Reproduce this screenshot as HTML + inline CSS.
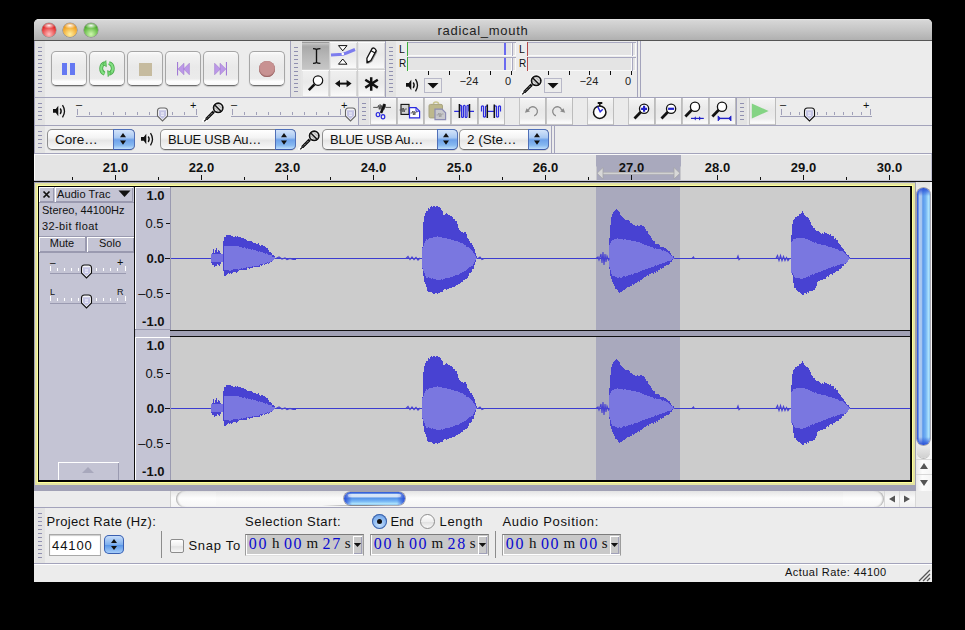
<!DOCTYPE html>
<html><head><meta charset="utf-8"><style>
html,body{margin:0;padding:0;}
body{width:965px;height:630px;background:#000;position:relative;overflow:hidden;font-family:"Liberation Sans",sans-serif;}
body>div,body>span,body>svg{position:absolute;display:block;box-sizing:border-box;}
body>span{white-space:nowrap;}
body>div>div{box-sizing:border-box;}
</style></head><body>
<div style="left:34px;top:19px;width:898px;height:563px;background:#ececec;border-radius:5px 5px 0 0"></div>
<div style="left:34px;top:19px;width:898px;height:21px;background:linear-gradient(#e8e8e8,#d6d6d6 8%,#c6c6c6 50%,#b0b0b0);border-radius:5px 5px 0 0"></div>
<div style="left:34px;top:40px;width:898px;height:1px;background:#555"></div>
<div style="left:42px;top:23px;width:14px;height:14px;border-radius:50%;background:radial-gradient(ellipse 45% 22% at 50% 18%,rgba(255,255,255,.95),rgba(255,255,255,0)),radial-gradient(circle at 50% 80%,#ffc0c0,#e22a2a 65%,#9a1414);box-shadow:0 0 0 0.6px rgba(0,0,0,.3)"></div>
<div style="left:63px;top:23px;width:14px;height:14px;border-radius:50%;background:radial-gradient(ellipse 45% 22% at 50% 18%,rgba(255,255,255,.95),rgba(255,255,255,0)),radial-gradient(circle at 50% 80%,#fff0a0,#f0a020 65%,#b05a08);box-shadow:0 0 0 0.6px rgba(0,0,0,.3)"></div>
<div style="left:84px;top:23px;width:14px;height:14px;border-radius:50%;background:radial-gradient(ellipse 45% 22% at 50% 18%,rgba(255,255,255,.95),rgba(255,255,255,0)),radial-gradient(circle at 50% 80%,#d0f8b0,#52b032 65%,#2a6a14);box-shadow:0 0 0 0.6px rgba(0,0,0,.3)"></div>
<span style="left:383px;width:200px;text-align:center;top:23.60px;font-size:13px;line-height:13px;font-family:'Liberation Sans',sans-serif;color:#222;letter-spacing:0.72px">radical_mouth</span>
<div style="left:34px;top:41px;width:1px;height:113px;background:#a3a3bb"></div>
<div style="left:34px;top:97px;width:898px;height:1px;background:#a3a3bb"></div>
<div style="left:34px;top:125px;width:898px;height:1px;background:#a3a3bb"></div>
<div style="left:34px;top:153px;width:898px;height:1px;background:#a3a3bb"></div>
<div style="left:35px;top:41px;width:10px;height:56px;background:#e3e3e3"></div>
<div style="left:38px;top:47px;width:4px;height:1px;background:#9090b0"></div>
<div style="left:38px;top:51px;width:4px;height:1px;background:#9090b0"></div>
<div style="left:38px;top:55px;width:4px;height:1px;background:#9090b0"></div>
<div style="left:38px;top:59px;width:4px;height:1px;background:#9090b0"></div>
<div style="left:38px;top:63px;width:4px;height:1px;background:#9090b0"></div>
<div style="left:38px;top:67px;width:4px;height:1px;background:#9090b0"></div>
<div style="left:38px;top:71px;width:4px;height:1px;background:#9090b0"></div>
<div style="left:38px;top:75px;width:4px;height:1px;background:#9090b0"></div>
<div style="left:38px;top:79px;width:4px;height:1px;background:#9090b0"></div>
<div style="left:38px;top:83px;width:4px;height:1px;background:#9090b0"></div>
<div style="left:38px;top:87px;width:4px;height:1px;background:#9090b0"></div>
<div style="left:38px;top:91px;width:4px;height:1px;background:#9090b0"></div>
<div style="left:51px;top:51px;width:36px;height:35px;border:1px solid #a6a6a6;border-bottom-color:#6c6c6c;border-radius:5px;background:linear-gradient(#fcfcfc 0%,#f2f2f2 10%,#e9e9e9 45%,#ebebeb 80%,#fefefe 90%,#f8f8f8 100%);box-shadow:0 1px 1px rgba(0,0,0,.18)"></div>
<div style="left:89px;top:51px;width:36px;height:35px;border:1px solid #a6a6a6;border-bottom-color:#6c6c6c;border-radius:5px;background:linear-gradient(#fcfcfc 0%,#f2f2f2 10%,#e9e9e9 45%,#ebebeb 80%,#fefefe 90%,#f8f8f8 100%);box-shadow:0 1px 1px rgba(0,0,0,.18)"></div>
<div style="left:127px;top:51px;width:36px;height:35px;border:1px solid #a6a6a6;border-bottom-color:#6c6c6c;border-radius:5px;background:linear-gradient(#fcfcfc 0%,#f2f2f2 10%,#e9e9e9 45%,#ebebeb 80%,#fefefe 90%,#f8f8f8 100%);box-shadow:0 1px 1px rgba(0,0,0,.18)"></div>
<div style="left:165px;top:51px;width:36px;height:35px;border:1px solid #a6a6a6;border-bottom-color:#6c6c6c;border-radius:5px;background:linear-gradient(#fcfcfc 0%,#f2f2f2 10%,#e9e9e9 45%,#ebebeb 80%,#fefefe 90%,#f8f8f8 100%);box-shadow:0 1px 1px rgba(0,0,0,.18)"></div>
<div style="left:203px;top:51px;width:36px;height:35px;border:1px solid #a6a6a6;border-bottom-color:#6c6c6c;border-radius:5px;background:linear-gradient(#fcfcfc 0%,#f2f2f2 10%,#e9e9e9 45%,#ebebeb 80%,#fefefe 90%,#f8f8f8 100%);box-shadow:0 1px 1px rgba(0,0,0,.18)"></div>
<div style="left:249px;top:51px;width:36px;height:35px;border:1px solid #a6a6a6;border-bottom-color:#6c6c6c;border-radius:5px;background:linear-gradient(#fcfcfc 0%,#f2f2f2 10%,#e9e9e9 45%,#ebebeb 80%,#fefefe 90%,#f8f8f8 100%);box-shadow:0 1px 1px rgba(0,0,0,.18)"></div>
<div style="left:62px;top:63px;width:5px;height:12px;background:#6478f2"></div>
<div style="left:70px;top:63px;width:5px;height:12px;background:#6478f2"></div>
<svg style="left:90px;top:52px;" width="36" height="34" viewBox="0 0 36 34"><g fill="none"><path d="M15 11.05 A5.8 5.8 0 0 0 14.55 21.76" stroke="#48a848" stroke-width="3.8"/><path d="M18.98 11.05 A5.8 5.8 0 0 1 19.45 21.76" stroke="#48a848" stroke-width="3.8"/><path d="M15 11.05 A5.8 5.8 0 0 0 14.55 21.76" stroke="#82e082" stroke-width="2.2"/><path d="M18.98 11.05 A5.8 5.8 0 0 1 19.45 21.76" stroke="#82e082" stroke-width="2.2"/></g><path d="M15.9 8.6 L16.4 14.6 L12.6 12.4Z M18.1 24.6 L17.6 18.6 L21.4 20.8Z" fill="#74d874" stroke="#48a848" stroke-width="0.7"/></svg>
<div style="left:139px;top:63px;width:13px;height:13px;background:#c6bb9f"></div>
<svg style="left:175px;top:61px;" width="16" height="16" viewBox="0 0 16 16"><rect x="2" y="1" width="1.1" height="13.5" fill="#a27ad6"/><path d="M3.1 8 L9 2.2 V13.8Z M8.6 8 L14.4 2.2 V13.8Z" fill="#bc98e8" stroke="#9a74c8" stroke-width="0.5"/></svg>
<svg style="left:213px;top:61px;" width="16" height="16" viewBox="0 0 16 16"><rect x="12.9" y="1" width="1.1" height="13.5" fill="#a27ad6"/><path d="M12.9 8 L7 2.2 V13.8Z M7.4 8 L1.6 2.2 V13.8Z" fill="#bc98e8" stroke="#9a74c8" stroke-width="0.5"/></svg>
<div style="left:259px;top:61px;width:16px;height:16px;border-radius:50%;background:#c89292;box-shadow:inset 0 -1px 1px #946060,0 0 0.6px #a07070"></div>
<div style="left:290px;top:41px;width:1px;height:56px;background:#a3a3bb"></div>
<div style="left:291px;top:41px;width:10px;height:56px;background:#e3e3e3"></div>
<div style="left:294px;top:47px;width:4px;height:1px;background:#9090b0"></div>
<div style="left:294px;top:51px;width:4px;height:1px;background:#9090b0"></div>
<div style="left:294px;top:55px;width:4px;height:1px;background:#9090b0"></div>
<div style="left:294px;top:59px;width:4px;height:1px;background:#9090b0"></div>
<div style="left:294px;top:63px;width:4px;height:1px;background:#9090b0"></div>
<div style="left:294px;top:67px;width:4px;height:1px;background:#9090b0"></div>
<div style="left:294px;top:71px;width:4px;height:1px;background:#9090b0"></div>
<div style="left:294px;top:75px;width:4px;height:1px;background:#9090b0"></div>
<div style="left:294px;top:79px;width:4px;height:1px;background:#9090b0"></div>
<div style="left:294px;top:83px;width:4px;height:1px;background:#9090b0"></div>
<div style="left:294px;top:87px;width:4px;height:1px;background:#9090b0"></div>
<div style="left:294px;top:91px;width:4px;height:1px;background:#9090b0"></div>
<div style="left:301px;top:41px;width:84px;height:56px;background:#cfcfcf"></div>
<div style="left:302px;top:42px;width:27px;height:27px;background:linear-gradient(#d4d4d4,#b4b4b4 3px,#a9a9a9 5px,#b6b6b6 50%,#c6c6c6);box-shadow:inset 0 1px 0 #9c9c9c"></div>
<div style="left:330px;top:42px;width:27px;height:27px;background:linear-gradient(#f0f0f0,#e9e9e9 45%,#f1f1f1 75%,#fbfbfb);box-shadow:inset 0 1px 0 #fbfbfb,inset 0 -1px 0 #e0e0e0,inset 1px 0 0 #e6e6e6,inset -1px 0 0 #d8d8d8"></div>
<div style="left:358px;top:42px;width:27px;height:27px;background:linear-gradient(#f0f0f0,#e9e9e9 45%,#f1f1f1 75%,#fbfbfb);box-shadow:inset 0 1px 0 #fbfbfb,inset 0 -1px 0 #e0e0e0,inset 1px 0 0 #e6e6e6,inset -1px 0 0 #d8d8d8"></div>
<div style="left:302px;top:70px;width:27px;height:27px;background:linear-gradient(#f0f0f0,#e9e9e9 45%,#f1f1f1 75%,#fbfbfb);box-shadow:inset 0 1px 0 #fbfbfb,inset 0 -1px 0 #e0e0e0,inset 1px 0 0 #e6e6e6,inset -1px 0 0 #d8d8d8"></div>
<div style="left:330px;top:70px;width:27px;height:27px;background:linear-gradient(#f0f0f0,#e9e9e9 45%,#f1f1f1 75%,#fbfbfb);box-shadow:inset 0 1px 0 #fbfbfb,inset 0 -1px 0 #e0e0e0,inset 1px 0 0 #e6e6e6,inset -1px 0 0 #d8d8d8"></div>
<div style="left:358px;top:70px;width:27px;height:27px;background:linear-gradient(#f0f0f0,#e9e9e9 45%,#f1f1f1 75%,#fbfbfb);box-shadow:inset 0 1px 0 #fbfbfb,inset 0 -1px 0 #e0e0e0,inset 1px 0 0 #e6e6e6,inset -1px 0 0 #d8d8d8"></div>
<div style="left:301px;top:41px;width:1px;height:56px;background:#e6e6e6"></div>
<svg style="left:302px;top:42px;" width="27" height="27" viewBox="0 0 27 27"><path d="M11 6.6 Q13.6 6.6 14.5 7.5 Q15.4 6.6 18.4 6.6 M14.5 7.5 V20.5 M11 21.4 Q13.6 21.4 14.5 20.5 Q15.4 21.4 18.4 21.4" stroke="#111" stroke-width="1.35" fill="none"/></svg>
<svg style="left:330px;top:42px;" width="27" height="27" viewBox="0 0 27 27"><path d="M8.5 3.6h8.5l-4.25 5.2z M8.5 22.2h8.5l-4.25-5.2z" fill="#fff" stroke="#111" stroke-width="1"/><path d="M1 12.9 L12.8 12.2 L16.5 11 L25 7.5" stroke="#7c7cee" stroke-width="3" fill="none"/><circle cx="12.8" cy="11.9" r="1.3" fill="#fff"/></svg>
<svg style="left:358px;top:42px;" width="27" height="27" viewBox="0 0 27 27"><path d="M14.2 6.4 Q16.5 5 18.2 8.6 L12.9 18.5 L9 20.9 L8.9 16.3 Z" fill="#9a9a9a" transform="translate(1.2,1.2)"/><path d="M14.2 6.4 Q16.5 5 18.2 8.6 L12.9 18.5 L9 20.9 L8.9 16.3 Z" fill="#fff" stroke="#111" stroke-width="1.3" stroke-linejoin="round"/><path d="M13 8.7 L17.1 10.9" stroke="#111" stroke-width="1.1"/><path d="M9 20.9 L8.9 18.3 L11.1 19.6Z" fill="#111"/></svg>
<svg style="left:302px;top:70px;" width="27" height="27" viewBox="0 0 27 27"><circle cx="16" cy="10.6" r="4.7" fill="#fff" stroke="#111" stroke-width="1.2"/><path d="M12.5 14.4 L6.8 20.2" stroke="#111" stroke-width="2.6"/></svg>
<svg style="left:330px;top:70px;" width="27" height="27" viewBox="0 0 27 27"><path d="M9 13.6h9" stroke="#111" stroke-width="2"/><path d="M5 13.6 L10 10 V17.2Z M21.6 13.6 L16.6 10 V17.2Z" fill="#111"/></svg>
<svg style="left:358px;top:70px;" width="27" height="27" viewBox="0 0 27 27"><path d="M13.2 7.3v13.5M7.3 9.8 L19.8 17.6M19.8 9.8 L7.3 17.6" stroke="#111" stroke-width="2.5"/></svg>
<div style="left:385px;top:41px;width:1px;height:56px;background:#a3a3bb"></div>
<div style="left:386px;top:41px;width:10px;height:56px;background:#e3e3e3"></div>
<div style="left:389px;top:47px;width:4px;height:1px;background:#9090b0"></div>
<div style="left:389px;top:51px;width:4px;height:1px;background:#9090b0"></div>
<div style="left:389px;top:55px;width:4px;height:1px;background:#9090b0"></div>
<div style="left:389px;top:59px;width:4px;height:1px;background:#9090b0"></div>
<div style="left:389px;top:63px;width:4px;height:1px;background:#9090b0"></div>
<div style="left:389px;top:67px;width:4px;height:1px;background:#9090b0"></div>
<div style="left:389px;top:71px;width:4px;height:1px;background:#9090b0"></div>
<div style="left:389px;top:75px;width:4px;height:1px;background:#9090b0"></div>
<div style="left:389px;top:79px;width:4px;height:1px;background:#9090b0"></div>
<div style="left:389px;top:83px;width:4px;height:1px;background:#9090b0"></div>
<div style="left:389px;top:87px;width:4px;height:1px;background:#9090b0"></div>
<div style="left:389px;top:91px;width:4px;height:1px;background:#9090b0"></div>
<span style="left:399px;top:44.11px;font-size:10.5px;line-height:10.5px;font-family:'Liberation Sans',sans-serif;color:#111">L</span>
<span style="left:399px;top:58.53px;font-size:10px;line-height:10px;font-family:'Liberation Sans',sans-serif;color:#111">R</span>
<div style="left:407px;top:42px;width:105px;height:14px;background:#e4e4e4;box-shadow:inset 0 1px 0 #a8a8c0,inset -1px -1px 0 #fafafa"></div>
<div style="left:407px;top:42px;width:1px;height:14px;background:#3cae3c"></div>
<div style="left:512px;top:42px;width:4px;height:14px;background:#e4e4e4;box-shadow:inset 1px 1px 0 #a8a8c0,inset -1px -1px 0 #fafafa"></div>
<div style="left:407px;top:57px;width:105px;height:14px;background:#e4e4e4;box-shadow:inset 0 1px 0 #a8a8c0,inset -1px -1px 0 #fafafa"></div>
<div style="left:407px;top:57px;width:1px;height:14px;background:#3cae3c"></div>
<div style="left:512px;top:57px;width:4px;height:14px;background:#e4e4e4;box-shadow:inset 1px 1px 0 #a8a8c0,inset -1px -1px 0 #fafafa"></div>
<div style="left:428px;top:71px;width:1px;height:4px;background:#111"></div>
<div style="left:449px;top:71px;width:1px;height:4px;background:#111"></div>
<div style="left:469px;top:71px;width:1px;height:4px;background:#111"></div>
<div style="left:490px;top:71px;width:1px;height:4px;background:#111"></div>
<div style="left:511px;top:71px;width:1px;height:4px;background:#111"></div>
<span style="left:369px;width:200px;text-align:center;top:75.69px;font-size:11px;line-height:11px;font-family:'Liberation Sans',sans-serif;color:#222">−24</span>
<span style="left:408px;width:200px;text-align:center;top:75.69px;font-size:11px;line-height:11px;font-family:'Liberation Sans',sans-serif;color:#222">0</span>
<div style="left:424px;top:78px;width:18px;height:15px;border:1px solid #b8b8c8;background:#ececec"></div>
<svg style="left:426px;top:80px;" width="14" height="10" viewBox="0 0 14 10"><path d="M1.5 3 H12.5 L7 8.5Z" fill="#111"/></svg>
<div style="left:504px;top:43px;width:2px;height:12px;background:#6a6af0"></div>
<div style="left:504px;top:58px;width:2px;height:12px;background:#6a6af0"></div>
<span style="left:519px;top:44.11px;font-size:10.5px;line-height:10.5px;font-family:'Liberation Sans',sans-serif;color:#111">L</span>
<span style="left:519px;top:58.53px;font-size:10px;line-height:10px;font-family:'Liberation Sans',sans-serif;color:#111">R</span>
<div style="left:527px;top:42px;width:105px;height:14px;background:#e4e4e4;box-shadow:inset 0 1px 0 #a8a8c0,inset -1px -1px 0 #fafafa"></div>
<div style="left:527px;top:42px;width:1px;height:14px;background:#b44a4a"></div>
<div style="left:632px;top:42px;width:4px;height:14px;background:#e4e4e4;box-shadow:inset 1px 1px 0 #a8a8c0,inset -1px -1px 0 #fafafa"></div>
<div style="left:527px;top:57px;width:105px;height:14px;background:#e4e4e4;box-shadow:inset 0 1px 0 #a8a8c0,inset -1px -1px 0 #fafafa"></div>
<div style="left:527px;top:57px;width:1px;height:14px;background:#b44a4a"></div>
<div style="left:632px;top:57px;width:4px;height:14px;background:#e4e4e4;box-shadow:inset 1px 1px 0 #a8a8c0,inset -1px -1px 0 #fafafa"></div>
<div style="left:548px;top:71px;width:1px;height:4px;background:#111"></div>
<div style="left:569px;top:71px;width:1px;height:4px;background:#111"></div>
<div style="left:589px;top:71px;width:1px;height:4px;background:#111"></div>
<div style="left:610px;top:71px;width:1px;height:4px;background:#111"></div>
<div style="left:631px;top:71px;width:1px;height:4px;background:#111"></div>
<span style="left:489px;width:200px;text-align:center;top:75.69px;font-size:11px;line-height:11px;font-family:'Liberation Sans',sans-serif;color:#222">−24</span>
<span style="left:528px;width:200px;text-align:center;top:75.69px;font-size:11px;line-height:11px;font-family:'Liberation Sans',sans-serif;color:#222">0</span>
<div style="left:544px;top:78px;width:18px;height:15px;border:1px solid #b8b8c8;background:#ececec"></div>
<svg style="left:546px;top:80px;" width="14" height="10" viewBox="0 0 14 10"><path d="M1.5 3 H12.5 L7 8.5Z" fill="#111"/></svg>
<svg style="left:405px;top:78px;" width="15" height="15" viewBox="0 0 15 15"><path d="M1 5 H3.8 L6.3 1.8 V12.2 L3.8 8.8 H1Z" fill="#111"/><path d="M8.2 4.5 Q10.2 7.2 8.2 10" stroke="#111" stroke-width="1.3" fill="none"/><path d="M10.5 1.2 Q14.5 7.2 10.5 13.3" stroke="#111" stroke-width="1.3" fill="none"/></svg>
<svg style="left:520px;top:73px;" width="22" height="22" viewBox="0 0 22 22"><path d="M2.2 21.4 L11.8 11.6" stroke="#fff" stroke-width="4.5" stroke-linecap="round"/><circle cx="16.2" cy="7.8" r="6.3" fill="#fff"/><path d="M2.2 21.4 L5 18.6" stroke="#111" stroke-width="1.3"/><path d="M4.2 19.2 L11.8 11.6" stroke="#111" stroke-width="3"/><path d="M5 18.4 L11 12.4" stroke="#fff" stroke-width="0.8" stroke-dasharray="1 1.2"/><circle cx="16.2" cy="7.8" r="4.7" fill="#e4e4e4" stroke="#111" stroke-width="1.7"/><path d="M15.6 4.2 L19.8 8.4 M12.6 7.2 L16.8 11.4" stroke="#9a9a9a" stroke-width="0.9"/><path d="M13 5.2 L18.8 11" stroke="#111" stroke-width="1.5"/></svg>
<div style="left:637px;top:41px;width:1px;height:56px;background:#a3a3bb"></div>
<div style="left:640px;top:41px;width:1px;height:56px;background:#a3a3bb"></div>
<div style="left:35px;top:98px;width:10px;height:27px;background:#e3e3e3"></div>
<div style="left:38px;top:103px;width:4px;height:1px;background:#9090b0"></div>
<div style="left:38px;top:107px;width:4px;height:1px;background:#9090b0"></div>
<div style="left:38px;top:111px;width:4px;height:1px;background:#9090b0"></div>
<div style="left:38px;top:115px;width:4px;height:1px;background:#9090b0"></div>
<div style="left:38px;top:119px;width:4px;height:1px;background:#9090b0"></div>
<svg style="left:52px;top:104px;" width="15" height="15" viewBox="0 0 15 15"><path d="M1 5 H3.8 L6.3 1.8 V12.2 L3.8 8.8 H1Z" fill="#111"/><path d="M8.2 4.5 Q10.2 7.2 8.2 10" stroke="#111" stroke-width="1.3" fill="none"/><path d="M10.5 1.2 Q14.5 7.2 10.5 13.3" stroke="#111" stroke-width="1.3" fill="none"/></svg>
<div style="left:76px;top:116px;width:122px;height:1px;background:#a0a0b8"></div>
<div style="left:77px;top:112px;width:1px;height:3px;background:#a0a0b8"></div>
<div style="left:89px;top:112px;width:1px;height:3px;background:#a0a0b8"></div>
<div style="left:101px;top:112px;width:1px;height:3px;background:#a0a0b8"></div>
<div style="left:113px;top:112px;width:1px;height:3px;background:#a0a0b8"></div>
<div style="left:125px;top:112px;width:1px;height:3px;background:#a0a0b8"></div>
<div style="left:137px;top:112px;width:1px;height:3px;background:#a0a0b8"></div>
<div style="left:149px;top:112px;width:1px;height:3px;background:#a0a0b8"></div>
<div style="left:172px;top:112px;width:1px;height:3px;background:#a0a0b8"></div>
<div style="left:184px;top:112px;width:1px;height:3px;background:#a0a0b8"></div>
<div style="left:196px;top:112px;width:1px;height:3px;background:#a0a0b8"></div>
<div style="left:77px;top:109px;width:1px;height:6px;background:#a0a0b8"></div>
<div style="left:196px;top:109px;width:1px;height:6px;background:#a0a0b8"></div>
<svg style="left:156px;top:107px;" width="13" height="15" viewBox="0 0 13 15"><path d="M1.5 4 Q1.5 1 4.5 1 H8.5 Q11.5 1 11.5 4 V9 L6.5 14 L1.5 9Z" fill="#f4f4f8" stroke="#666" stroke-width="1.1"/><path d="M3 3.2 H10 V9 L6.5 12 L3 9Z" fill="#c4c4e4"/><path d="M5 6h3M5 8.2h3" stroke="#fff" stroke-width="0.9"/></svg>
<span style="left:76px;top:98.69px;font-size:11px;line-height:11px;font-family:'Liberation Sans',sans-serif;color:#111">–</span>
<span style="left:190px;top:99.69px;font-size:11px;line-height:11px;font-family:'Liberation Sans',sans-serif;color:#111">+</span>
<svg style="left:202px;top:100px;" width="22" height="22" viewBox="0 0 22 22"><path d="M2.2 21.4 L11.8 11.6" stroke="#fff" stroke-width="4.5" stroke-linecap="round"/><circle cx="16.2" cy="7.8" r="6.3" fill="#fff"/><path d="M2.2 21.4 L5 18.6" stroke="#111" stroke-width="1.3"/><path d="M4.2 19.2 L11.8 11.6" stroke="#111" stroke-width="3"/><path d="M5 18.4 L11 12.4" stroke="#fff" stroke-width="0.8" stroke-dasharray="1 1.2"/><circle cx="16.2" cy="7.8" r="4.7" fill="#e4e4e4" stroke="#111" stroke-width="1.7"/><path d="M15.6 4.2 L19.8 8.4 M12.6 7.2 L16.8 11.4" stroke="#9a9a9a" stroke-width="0.9"/><path d="M13 5.2 L18.8 11" stroke="#111" stroke-width="1.5"/></svg>
<div style="left:231px;top:116px;width:116px;height:1px;background:#a0a0b8"></div>
<div style="left:232px;top:112px;width:1px;height:3px;background:#a0a0b8"></div>
<div style="left:244px;top:112px;width:1px;height:3px;background:#a0a0b8"></div>
<div style="left:256px;top:112px;width:1px;height:3px;background:#a0a0b8"></div>
<div style="left:268px;top:112px;width:1px;height:3px;background:#a0a0b8"></div>
<div style="left:280px;top:112px;width:1px;height:3px;background:#a0a0b8"></div>
<div style="left:292px;top:112px;width:1px;height:3px;background:#a0a0b8"></div>
<div style="left:304px;top:112px;width:1px;height:3px;background:#a0a0b8"></div>
<div style="left:316px;top:112px;width:1px;height:3px;background:#a0a0b8"></div>
<div style="left:328px;top:112px;width:1px;height:3px;background:#a0a0b8"></div>
<div style="left:340px;top:112px;width:1px;height:3px;background:#a0a0b8"></div>
<div style="left:232px;top:109px;width:1px;height:6px;background:#a0a0b8"></div>
<div style="left:340px;top:109px;width:1px;height:6px;background:#a0a0b8"></div>
<svg style="left:344px;top:107px;" width="13" height="15" viewBox="0 0 13 15"><path d="M1.5 4 Q1.5 1 4.5 1 H8.5 Q11.5 1 11.5 4 V9 L6.5 14 L1.5 9Z" fill="#f4f4f8" stroke="#666" stroke-width="1.1"/><path d="M3 3.2 H10 V9 L6.5 12 L3 9Z" fill="#c4c4e4"/><path d="M5 6h3M5 8.2h3" stroke="#fff" stroke-width="0.9"/></svg>
<span style="left:231px;top:98.69px;font-size:11px;line-height:11px;font-family:'Liberation Sans',sans-serif;color:#111">–</span>
<span style="left:341px;top:99.69px;font-size:11px;line-height:11px;font-family:'Liberation Sans',sans-serif;color:#111">+</span>
<div style="left:358px;top:98px;width:1px;height:27px;background:#a3a3bb"></div>
<div style="left:359px;top:98px;width:10px;height:27px;background:#e3e3e3"></div>
<div style="left:362px;top:103px;width:4px;height:1px;background:#9090b0"></div>
<div style="left:362px;top:107px;width:4px;height:1px;background:#9090b0"></div>
<div style="left:362px;top:111px;width:4px;height:1px;background:#9090b0"></div>
<div style="left:362px;top:115px;width:4px;height:1px;background:#9090b0"></div>
<div style="left:362px;top:119px;width:4px;height:1px;background:#9090b0"></div>
<div style="left:370px;top:98px;width:27px;height:27px;background:linear-gradient(#ffffff,#f2f2f2 8%,#e8e8e8 45%,#ececec 75%,#fafafa 90%,#f4f4f4);box-shadow:inset 1px 0 0 #c4c4c4,inset -1px 0 0 #bcbcbc,inset 0 -1px 0 #c8c8c8"></div>
<div style="left:397px;top:98px;width:27px;height:27px;background:linear-gradient(#ffffff,#f2f2f2 8%,#e8e8e8 45%,#ececec 75%,#fafafa 90%,#f4f4f4);box-shadow:inset 1px 0 0 #c4c4c4,inset -1px 0 0 #bcbcbc,inset 0 -1px 0 #c8c8c8"></div>
<div style="left:424px;top:98px;width:27px;height:27px;background:linear-gradient(#ffffff,#f2f2f2 8%,#e8e8e8 45%,#ececec 75%,#fafafa 90%,#f4f4f4);box-shadow:inset 1px 0 0 #c4c4c4,inset -1px 0 0 #bcbcbc,inset 0 -1px 0 #c8c8c8"></div>
<div style="left:451px;top:98px;width:27px;height:27px;background:linear-gradient(#ffffff,#f2f2f2 8%,#e8e8e8 45%,#ececec 75%,#fafafa 90%,#f4f4f4);box-shadow:inset 1px 0 0 #c4c4c4,inset -1px 0 0 #bcbcbc,inset 0 -1px 0 #c8c8c8"></div>
<div style="left:478px;top:98px;width:27px;height:27px;background:linear-gradient(#ffffff,#f2f2f2 8%,#e8e8e8 45%,#ececec 75%,#fafafa 90%,#f4f4f4);box-shadow:inset 1px 0 0 #c4c4c4,inset -1px 0 0 #bcbcbc,inset 0 -1px 0 #c8c8c8"></div>
<div style="left:519px;top:98px;width:27px;height:27px;background:linear-gradient(#ffffff,#f2f2f2 8%,#e8e8e8 45%,#ececec 75%,#fafafa 90%,#f4f4f4);box-shadow:inset 1px 0 0 #c4c4c4,inset -1px 0 0 #bcbcbc,inset 0 -1px 0 #c8c8c8"></div>
<div style="left:546px;top:98px;width:27px;height:27px;background:linear-gradient(#ffffff,#f2f2f2 8%,#e8e8e8 45%,#ececec 75%,#fafafa 90%,#f4f4f4);box-shadow:inset 1px 0 0 #c4c4c4,inset -1px 0 0 #bcbcbc,inset 0 -1px 0 #c8c8c8"></div>
<div style="left:587px;top:98px;width:27px;height:27px;background:linear-gradient(#ffffff,#f2f2f2 8%,#e8e8e8 45%,#ececec 75%,#fafafa 90%,#f4f4f4);box-shadow:inset 1px 0 0 #c4c4c4,inset -1px 0 0 #bcbcbc,inset 0 -1px 0 #c8c8c8"></div>
<div style="left:628px;top:98px;width:27px;height:27px;background:linear-gradient(#ffffff,#f2f2f2 8%,#e8e8e8 45%,#ececec 75%,#fafafa 90%,#f4f4f4);box-shadow:inset 1px 0 0 #c4c4c4,inset -1px 0 0 #bcbcbc,inset 0 -1px 0 #c8c8c8"></div>
<div style="left:655px;top:98px;width:27px;height:27px;background:linear-gradient(#ffffff,#f2f2f2 8%,#e8e8e8 45%,#ececec 75%,#fafafa 90%,#f4f4f4);box-shadow:inset 1px 0 0 #c4c4c4,inset -1px 0 0 #bcbcbc,inset 0 -1px 0 #c8c8c8"></div>
<div style="left:682px;top:98px;width:27px;height:27px;background:linear-gradient(#ffffff,#f2f2f2 8%,#e8e8e8 45%,#ececec 75%,#fafafa 90%,#f4f4f4);box-shadow:inset 1px 0 0 #c4c4c4,inset -1px 0 0 #bcbcbc,inset 0 -1px 0 #c8c8c8"></div>
<div style="left:709px;top:98px;width:27px;height:27px;background:linear-gradient(#ffffff,#f2f2f2 8%,#e8e8e8 45%,#ececec 75%,#fafafa 90%,#f4f4f4);box-shadow:inset 1px 0 0 #c4c4c4,inset -1px 0 0 #bcbcbc,inset 0 -1px 0 #c8c8c8"></div>
<div style="left:505px;top:98px;width:14px;height:27px;background:#ebebeb"></div>
<div style="left:573px;top:98px;width:14px;height:27px;background:#ebebeb"></div>
<div style="left:614px;top:98px;width:14px;height:27px;background:#ebebeb"></div>
<svg style="left:370px;top:98px;" width="27" height="27" viewBox="0 0 27 27"><path d="M3.2 9.4h4.5l0.8-2 0.8 4 0.8-5 0.8 5 0.8-4 0.8 4 0.8-5 0.8 5 0.8-4 0.6 2h5.5" stroke="#333" stroke-width="0.8" fill="none"/><path d="M14.8 6 L11 15" stroke="#111" stroke-width="2.6"/><ellipse cx="8" cy="16.6" rx="1.8" ry="2.1" fill="none" stroke="#2a2ae0" stroke-width="1.2"/><ellipse cx="13" cy="18.8" rx="1.8" ry="2.1" fill="none" stroke="#2a2ae0" stroke-width="1.2"/></svg>
<svg style="left:397px;top:98px;" width="27" height="27" viewBox="0 0 27 27"><rect x="4" y="6.4" width="8" height="10" fill="#d4d4d4" stroke="#111" stroke-width="1.1"/><path d="M2.5 12h2l0.7-2 0.7 4 0.7-4 0.7 4 0.7-3h2" stroke="#444" fill="none" stroke-width="0.7"/><path d="M12.5 9.6h6.5l3.6 3.6v6.6h-10.1z" fill="#fff" stroke="#2a2ae0" stroke-width="1.2"/><path d="M19 9.6v3.6h3.6" fill="none" stroke="#2a2ae0" stroke-width="1"/><path d="M13.5 15h1.5l0.7-2 0.7 4 0.7-4 0.7 4 0.7-3h2" stroke="#444" fill="none" stroke-width="0.7"/></svg>
<svg style="left:424px;top:98px;" width="27" height="27" viewBox="0 0 27 27"><rect x="5" y="6.4" width="13.5" height="13.5" rx="1.5" fill="#bdb88c" stroke="#a8a480" stroke-width="1"/><path d="M9.5 6 Q9.5 4 12 4 Q14.5 4 14.5 6" fill="none" stroke="#c8c490" stroke-width="1.5"/><path d="M11 11.2h7l3.6 3.6v6.8h-10.6z" fill="#c8c8cc" stroke="#8c8cb4" stroke-width="1.2"/><path d="M12.5 17h1.5l0.7-2 0.7 4 0.7-4 0.7 4 0.7-3h2" stroke="#999" fill="none" stroke-width="0.7"/></svg>
<svg style="left:451px;top:98px;" width="27" height="27" viewBox="0 0 27 27"><path d="M3.2 13.4h5.2M18.5 13.4h4.5" stroke="#2a2ae0" stroke-width="1.2"/><path d="M8.8 13.4 V8 q0.9-1.2 1.8 0 V18.8 q0.9 1.2 1.8 0 V8 q0.9-1.2 1.8 0 V18.8 q0.9 1.2 1.8 0 V8 q0.9-1.2 1.8 0 V13.4" stroke="#2a2ae0" stroke-width="1.2" fill="none"/><path d="M8.4 6V20M18.5 6V20" stroke="#111" stroke-width="1.5"/></svg>
<svg style="left:478px;top:98px;" width="27" height="27" viewBox="0 0 27 27"><path d="M9.3 13.4h7" stroke="#2a2ae0" stroke-width="1.2"/><path d="M3.5 13.4 V8.5 q1-1.2 2 0 V18.5 q1 1.2 2 0 V8.5 q0.8-1 1.8 0 M16.5 13.4 V8.5 q1-1.2 2 0 V18.5 q1 1.2 2 0 V8.5 q1-1.2 2 0 V13.4" stroke="#2a2ae0" stroke-width="1.2" fill="none"/><path d="M9.3 6.4V20M16.3 6.4V20" stroke="#111" stroke-width="1.5"/></svg>
<svg style="left:520px;top:98px;" width="27" height="27" viewBox="0 0 27 27"><path d="M8.4 12.2 A4.6 4.6 0 1 1 14.2 17.8" stroke="#8a8a8a" stroke-width="1.3" fill="none"/><path d="M4.9 14.8 L6.6 10.2 L10 13.6Z" fill="#8a8a8a"/></svg>
<svg style="left:547px;top:98px;" width="27" height="27" viewBox="0 0 27 27"><path d="M14.7 12.2 A4.6 4.6 0 1 0 8.9 17.8" stroke="#8a8a8a" stroke-width="1.3" fill="none"/><path d="M18.2 14.8 L16.5 10.2 L13.1 13.6Z" fill="#8a8a8a"/></svg>
<svg style="left:587px;top:98px;" width="27" height="27" viewBox="0 0 27 27"><circle cx="13.4" cy="14.9" r="6.2" fill="#bbb"/><circle cx="12.7" cy="14.2" r="6.2" fill="#fff" stroke="#111" stroke-width="1.5"/><rect x="10.7" y="4" width="4.6" height="2" fill="#111"/><rect x="12" y="5.5" width="1.6" height="2.5" fill="#111"/><path d="M10.7 8.6 L13.2 13.8 L15.8 11.2" stroke="#2a2ae0" stroke-width="1.4" fill="none"/></svg>
<svg style="left:628px;top:98px;" width="27" height="27" viewBox="0 0 27 27"><circle cx="16.1" cy="10.8" r="4.6" fill="#fff" stroke="#111" stroke-width="1.3"/><path d="M12.8 14.100000000000001 L6.500000000000002 20.4" stroke="#111" stroke-width="2.8"/><path d="M13.100000000000001 10.8h6M16.1 7.800000000000001v6" stroke="#2020c8" stroke-width="2.2"/></svg>
<svg style="left:655px;top:98px;" width="27" height="27" viewBox="0 0 27 27"><circle cx="16.1" cy="10.8" r="4.6" fill="#fff" stroke="#111" stroke-width="1.3"/><path d="M12.8 14.100000000000001 L6.500000000000002 20.4" stroke="#111" stroke-width="2.8"/><path d="M13.100000000000001 10.8h6" stroke="#2020c8" stroke-width="2.2"/></svg>
<svg style="left:682px;top:98px;" width="27" height="27" viewBox="0 0 27 27"><circle cx="13" cy="8.8" r="4.6" fill="#fff" stroke="#111" stroke-width="1.3"/><path d="M9.7 12.100000000000001 L3.4000000000000004 18.4" stroke="#111" stroke-width="2.8"/><path d="M9 20.4h12.8" stroke="#2020c8" stroke-width="1.2"/><path d="M11.8 20.4 L13.8 18.2 V22.6Z M19.2 20.4 L17 18.2 V22.6Z" fill="#2020c8"/></svg>
<svg style="left:709px;top:98px;" width="27" height="27" viewBox="0 0 27 27"><circle cx="13" cy="8.8" r="4.6" fill="#fff" stroke="#111" stroke-width="1.3"/><path d="M9.7 12.100000000000001 L3.4000000000000004 18.4" stroke="#111" stroke-width="2.8"/><path d="M9.5 20.4h12" stroke="#2020c8" stroke-width="1.4"/><path d="M9.1 17.9 V22.9 L11.3 20.4Z M22 17.9 V22.9 L19.8 20.4Z" fill="#2020c8" stroke="#2020c8" stroke-width="0.8"/></svg>
<div style="left:736px;top:98px;width:1px;height:27px;background:#a3a3bb"></div>
<div style="left:737px;top:98px;width:10px;height:27px;background:#e3e3e3"></div>
<div style="left:740px;top:103px;width:4px;height:1px;background:#9090b0"></div>
<div style="left:740px;top:107px;width:4px;height:1px;background:#9090b0"></div>
<div style="left:740px;top:111px;width:4px;height:1px;background:#9090b0"></div>
<div style="left:740px;top:115px;width:4px;height:1px;background:#9090b0"></div>
<div style="left:740px;top:119px;width:4px;height:1px;background:#9090b0"></div>
<div style="left:749px;top:98px;width:27px;height:27px;background:linear-gradient(#ffffff,#f2f2f2 8%,#e8e8e8 45%,#ececec 75%,#fafafa 90%,#f4f4f4);box-shadow:inset 1px 0 0 #c4c4c4,inset -1px 0 0 #bcbcbc,inset 0 -1px 0 #c8c8c8"></div>
<svg style="left:749px;top:98px;" width="27" height="27" viewBox="0 0 27 27"><path d="M2.8 5.5 L19.6 13 L2.8 20.5Z" fill="#84d484"/></svg>
<div style="left:780px;top:116px;width:92px;height:1px;background:#a0a0b8"></div>
<div style="left:781px;top:112px;width:1px;height:3px;background:#a0a0b8"></div>
<div style="left:790px;top:112px;width:1px;height:3px;background:#a0a0b8"></div>
<div style="left:799px;top:112px;width:1px;height:3px;background:#a0a0b8"></div>
<div style="left:817px;top:112px;width:1px;height:3px;background:#a0a0b8"></div>
<div style="left:826px;top:112px;width:1px;height:3px;background:#a0a0b8"></div>
<div style="left:834px;top:112px;width:1px;height:3px;background:#a0a0b8"></div>
<div style="left:843px;top:112px;width:1px;height:3px;background:#a0a0b8"></div>
<div style="left:852px;top:112px;width:1px;height:3px;background:#a0a0b8"></div>
<div style="left:861px;top:112px;width:1px;height:3px;background:#a0a0b8"></div>
<div style="left:870px;top:112px;width:1px;height:3px;background:#a0a0b8"></div>
<div style="left:781px;top:109px;width:1px;height:6px;background:#a0a0b8"></div>
<div style="left:870px;top:109px;width:1px;height:6px;background:#a0a0b8"></div>
<svg style="left:803px;top:107px;" width="13" height="15" viewBox="0 0 13 15"><path d="M1.5 4 Q1.5 1 4.5 1 H8.5 Q11.5 1 11.5 4 V9 L6.5 14 L1.5 9Z" fill="#f4f4f8" stroke="#111" stroke-width="1.1"/><path d="M3 3.2 H10 V9 L6.5 12 L3 9Z" fill="#c4c4e4"/><path d="M5 6h3M5 8.2h3" stroke="#fff" stroke-width="0.9"/></svg>
<span style="left:780px;top:98.69px;font-size:11px;line-height:11px;font-family:'Liberation Sans',sans-serif;color:#111">–</span>
<span style="left:863px;top:99.69px;font-size:11px;line-height:11px;font-family:'Liberation Sans',sans-serif;color:#111">+</span>
<div style="left:35px;top:126px;width:10px;height:27px;background:#e3e3e3"></div>
<div style="left:38px;top:131px;width:4px;height:1px;background:#9090b0"></div>
<div style="left:38px;top:135px;width:4px;height:1px;background:#9090b0"></div>
<div style="left:38px;top:139px;width:4px;height:1px;background:#9090b0"></div>
<div style="left:38px;top:143px;width:4px;height:1px;background:#9090b0"></div>
<div style="left:38px;top:147px;width:4px;height:1px;background:#9090b0"></div>
<div style="left:47px;top:129px;width:88px;height:21px;border:1px solid #8e8e8e;border-bottom-color:#6e6e6e;border-radius:5px;background:linear-gradient(#ffffff,#f4f4f4 40%,#e6e6e6 55%,#f2f2f2 85%,#fbfbfb);box-shadow:0 1px 0.5px rgba(0,0,0,.12)"></div>
<div style="left:113px;top:129px;width:22px;height:21px;border:1px solid #5070b8;border-bottom-color:#3a58a8;border-radius:0 5px 5px 0;background:linear-gradient(#d4e4fa,#a8c8f2 40%,#6ea2ea 52%,#86b8f0 80%,#c0e0fc)"></div>
<svg style="left:117.5px;top:131px;" width="10" height="17" viewBox="0 0 10 17"><path d="M5 2 L8 6.3 H2Z M5 13.7 L8 9.6 H2Z" fill="#111"/></svg>
<span style="left:55px;top:132.57px;font-size:13.5px;line-height:13.5px;font-family:'Liberation Sans',sans-serif;color:#111;letter-spacing:0">Core…</span>
<svg style="left:140px;top:132px;" width="15" height="15" viewBox="0 0 15 15"><path d="M1 5 H3.8 L6.3 1.8 V12.2 L3.8 8.8 H1Z" fill="#111"/><path d="M8.2 4.5 Q10.2 7.2 8.2 10" stroke="#111" stroke-width="1.3" fill="none"/><path d="M10.5 1.2 Q14.5 7.2 10.5 13.3" stroke="#111" stroke-width="1.3" fill="none"/></svg>
<div style="left:160px;top:129px;width:136px;height:21px;border:1px solid #8e8e8e;border-bottom-color:#6e6e6e;border-radius:5px;background:linear-gradient(#ffffff,#f4f4f4 40%,#e6e6e6 55%,#f2f2f2 85%,#fbfbfb);box-shadow:0 1px 0.5px rgba(0,0,0,.12)"></div>
<div style="left:275px;top:129px;width:21px;height:21px;border:1px solid #5070b8;border-bottom-color:#3a58a8;border-radius:0 5px 5px 0;background:linear-gradient(#d4e4fa,#a8c8f2 40%,#6ea2ea 52%,#86b8f0 80%,#c0e0fc)"></div>
<svg style="left:279.0px;top:131px;" width="10" height="17" viewBox="0 0 10 17"><path d="M5 2 L8 6.3 H2Z M5 13.7 L8 9.6 H2Z" fill="#111"/></svg>
<span style="left:168px;top:133.00px;font-size:13px;line-height:13px;font-family:'Liberation Sans',sans-serif;color:#111;letter-spacing:-0.25px">BLUE USB Au…</span>
<svg style="left:298px;top:128px;" width="22" height="22" viewBox="0 0 22 22"><path d="M2.2 21.4 L11.8 11.6" stroke="#fff" stroke-width="4.5" stroke-linecap="round"/><circle cx="16.2" cy="7.8" r="6.3" fill="#fff"/><path d="M2.2 21.4 L5 18.6" stroke="#111" stroke-width="1.3"/><path d="M4.2 19.2 L11.8 11.6" stroke="#111" stroke-width="3"/><path d="M5 18.4 L11 12.4" stroke="#fff" stroke-width="0.8" stroke-dasharray="1 1.2"/><circle cx="16.2" cy="7.8" r="4.7" fill="#e4e4e4" stroke="#111" stroke-width="1.7"/><path d="M15.6 4.2 L19.8 8.4 M12.6 7.2 L16.8 11.4" stroke="#9a9a9a" stroke-width="0.9"/><path d="M13 5.2 L18.8 11" stroke="#111" stroke-width="1.5"/></svg>
<div style="left:322px;top:129px;width:136px;height:21px;border:1px solid #8e8e8e;border-bottom-color:#6e6e6e;border-radius:5px;background:linear-gradient(#ffffff,#f4f4f4 40%,#e6e6e6 55%,#f2f2f2 85%,#fbfbfb);box-shadow:0 1px 0.5px rgba(0,0,0,.12)"></div>
<div style="left:437px;top:129px;width:21px;height:21px;border:1px solid #5070b8;border-bottom-color:#3a58a8;border-radius:0 5px 5px 0;background:linear-gradient(#d4e4fa,#a8c8f2 40%,#6ea2ea 52%,#86b8f0 80%,#c0e0fc)"></div>
<svg style="left:441.0px;top:131px;" width="10" height="17" viewBox="0 0 10 17"><path d="M5 2 L8 6.3 H2Z M5 13.7 L8 9.6 H2Z" fill="#111"/></svg>
<span style="left:330px;top:133.00px;font-size:13px;line-height:13px;font-family:'Liberation Sans',sans-serif;color:#111;letter-spacing:-0.25px">BLUE USB Au…</span>
<div style="left:459px;top:129px;width:90px;height:21px;border:1px solid #8e8e8e;border-bottom-color:#6e6e6e;border-radius:5px;background:linear-gradient(#ffffff,#f4f4f4 40%,#e6e6e6 55%,#f2f2f2 85%,#fbfbfb);box-shadow:0 1px 0.5px rgba(0,0,0,.12)"></div>
<div style="left:528px;top:129px;width:21px;height:21px;border:1px solid #5070b8;border-bottom-color:#3a58a8;border-radius:0 5px 5px 0;background:linear-gradient(#d4e4fa,#a8c8f2 40%,#6ea2ea 52%,#86b8f0 80%,#c0e0fc)"></div>
<svg style="left:532.0px;top:131px;" width="10" height="17" viewBox="0 0 10 17"><path d="M5 2 L8 6.3 H2Z M5 13.7 L8 9.6 H2Z" fill="#111"/></svg>
<span style="left:467px;top:132.57px;font-size:13.5px;line-height:13.5px;font-family:'Liberation Sans',sans-serif;color:#111;letter-spacing:0">2 (Ste…</span>
<div style="left:551px;top:126px;width:1px;height:27px;background:#a3a3bb"></div>
<div style="left:554px;top:126px;width:1px;height:27px;background:#a3a3bb"></div>
<div style="left:34px;top:154px;width:898px;height:27px;background:#e4e4e4"></div>
<div style="left:34px;top:154px;width:898px;height:1px;background:#fafafa"></div>
<div style="left:34px;top:154px;width:1px;height:27px;background:#fafafa"></div>
<div style="left:596px;top:155px;width:85px;height:26px;background:#a9a9bd"></div>
<div style="left:115px;top:175px;width:1px;height:5px;background:#111"></div>
<span style="left:15.5px;width:200px;text-align:center;top:161.00px;font-size:13px;line-height:13px;font-family:'Liberation Sans',sans-serif;color:#111;font-weight:bold">21.0</span>
<div style="left:201px;top:175px;width:1px;height:5px;background:#111"></div>
<span style="left:101.5px;width:200px;text-align:center;top:161.00px;font-size:13px;line-height:13px;font-family:'Liberation Sans',sans-serif;color:#111;font-weight:bold">22.0</span>
<div style="left:287px;top:175px;width:1px;height:5px;background:#111"></div>
<span style="left:187.5px;width:200px;text-align:center;top:161.00px;font-size:13px;line-height:13px;font-family:'Liberation Sans',sans-serif;color:#111;font-weight:bold">23.0</span>
<div style="left:373px;top:175px;width:1px;height:5px;background:#111"></div>
<span style="left:273.5px;width:200px;text-align:center;top:161.00px;font-size:13px;line-height:13px;font-family:'Liberation Sans',sans-serif;color:#111;font-weight:bold">24.0</span>
<div style="left:459px;top:175px;width:1px;height:5px;background:#111"></div>
<span style="left:359.5px;width:200px;text-align:center;top:161.00px;font-size:13px;line-height:13px;font-family:'Liberation Sans',sans-serif;color:#111;font-weight:bold">25.0</span>
<div style="left:545px;top:175px;width:1px;height:5px;background:#111"></div>
<span style="left:445.5px;width:200px;text-align:center;top:161.00px;font-size:13px;line-height:13px;font-family:'Liberation Sans',sans-serif;color:#111;font-weight:bold">26.0</span>
<div style="left:631px;top:175px;width:1px;height:5px;background:#111"></div>
<span style="left:531.5px;width:200px;text-align:center;top:161.00px;font-size:13px;line-height:13px;font-family:'Liberation Sans',sans-serif;color:#111;font-weight:bold">27.0</span>
<div style="left:717px;top:175px;width:1px;height:5px;background:#111"></div>
<span style="left:617.5px;width:200px;text-align:center;top:161.00px;font-size:13px;line-height:13px;font-family:'Liberation Sans',sans-serif;color:#111;font-weight:bold">28.0</span>
<div style="left:803px;top:175px;width:1px;height:5px;background:#111"></div>
<span style="left:703.5px;width:200px;text-align:center;top:161.00px;font-size:13px;line-height:13px;font-family:'Liberation Sans',sans-serif;color:#111;font-weight:bold">29.0</span>
<div style="left:889px;top:175px;width:1px;height:5px;background:#111"></div>
<span style="left:789.5px;width:200px;text-align:center;top:161.00px;font-size:13px;line-height:13px;font-family:'Liberation Sans',sans-serif;color:#111;font-weight:bold">30.0</span>
<div style="left:72px;top:177px;width:1px;height:3px;background:#111"></div>
<div style="left:158px;top:177px;width:1px;height:3px;background:#111"></div>
<div style="left:244px;top:177px;width:1px;height:3px;background:#111"></div>
<div style="left:330px;top:177px;width:1px;height:3px;background:#111"></div>
<div style="left:416px;top:177px;width:1px;height:3px;background:#111"></div>
<div style="left:502px;top:177px;width:1px;height:3px;background:#111"></div>
<div style="left:588px;top:177px;width:1px;height:3px;background:#111"></div>
<div style="left:760px;top:177px;width:1px;height:3px;background:#111"></div>
<div style="left:846px;top:177px;width:1px;height:3px;background:#111"></div>
<svg style="left:596px;top:165px;" width="86" height="16" viewBox="0 0 86 16"><path d="M0.5 1.5 V15 M84.5 1.5 V15" stroke="#c8c8cc" stroke-width="1"/><rect x="6" y="7.2" width="73" height="2.2" fill="#d2d2d2" stroke="#a8a8ac" stroke-width="0.5"/><path d="M1 8.3 L7 2.5 V14Z M84 8.3 L78 2.5 V14Z" fill="#d8d8d8" stroke="#a4a4a8" stroke-width="0.8"/></svg>
<div style="left:34px;top:180px;width:898px;height:1px;background:#c6c6d4"></div>
<div style="left:931px;top:154px;width:1px;height:27px;background:#c0c0d0"></div>
<div style="left:34px;top:181px;width:898px;height:1px;background:#111"></div>
<div style="left:34px;top:182px;width:882px;height:309px;background:#a1a1b5"></div>
<div style="left:35px;top:183px;width:880px;height:302px;background:#e4e4a4"></div>
<div style="left:37px;top:185px;width:876px;height:298px;background:#ffff98"></div>
<div style="left:38px;top:186px;width:874px;height:296px;background:#000"></div>
<div style="left:39px;top:187px;width:95px;height:293px;background:#c4c4d4"></div>
<div style="left:39px;top:187px;width:15px;height:15px;background:#c4c4d4;box-shadow:inset 1px 1px 0 #fff,inset -1px -1px 0 #9a9ab0"></div>
<svg style="left:39px;top:187px;" width="15" height="15" viewBox="0 0 15 15"><path d="M4.5 4.5 L10.5 10.5 M10.5 4.5 L4.5 10.5" stroke="#111" stroke-width="1.7"/></svg>
<div style="left:55px;top:187px;width:78px;height:15px;background:#c4c4d4;box-shadow:inset 1px 1px 0 #fff,inset -1px -1px 0 #9a9ab0"></div>
<span style="left:57px;top:189.19px;font-size:11px;line-height:11px;font-family:'Liberation Sans',sans-serif;color:#111;letter-spacing:0.1px">Audio Trac</span>
<svg style="left:118px;top:190px;" width="13" height="8" viewBox="0 0 13 8"><path d="M0.5 0.5 H12.5 L6.5 7Z" fill="#111"/></svg>
<div style="left:39px;top:202px;width:95px;height:1px;background:#9a9ab0"></div>
<span style="left:42px;top:204.69px;font-size:11px;line-height:11px;font-family:'Liberation Sans',sans-serif;color:#111;letter-spacing:0px">Stereo, 44100Hz</span>
<span style="left:42px;top:220.69px;font-size:11px;line-height:11px;font-family:'Liberation Sans',sans-serif;color:#111;letter-spacing:0.4px">32-bit float</span>
<div style="left:39px;top:236px;width:95px;height:1px;background:#9a9ab0"></div>
<div style="left:39px;top:237px;width:47px;height:15px;background:#c4c4d4;box-shadow:inset 1px 1px 0 #fff,inset 0 -1px 0 #9a9ab0"></div>
<div style="left:85px;top:237px;width:2px;height:15px;background:#9a9ab0"></div>
<div style="left:87px;top:237px;width:47px;height:15px;background:#c4c4d4;box-shadow:inset 1px 1px 0 #fff,inset -1px -1px 0 #9a9ab0"></div>
<span style="left:-38px;width:200px;text-align:center;top:237.69px;font-size:11px;line-height:11px;font-family:'Liberation Sans',sans-serif;color:#111">Mute</span>
<span style="left:10px;width:200px;text-align:center;top:237.69px;font-size:11px;line-height:11px;font-family:'Liberation Sans',sans-serif;color:#111">Solo</span>
<div style="left:39px;top:252px;width:95px;height:1px;background:#9a9ab0"></div>
<div style="left:50px;top:273px;width:76px;height:1px;background:#9a9ab0"></div>
<div style="left:50px;top:268px;width:1px;height:3px;background:#fff"></div>
<div style="left:57px;top:268px;width:1px;height:3px;background:#fff"></div>
<div style="left:64px;top:268px;width:1px;height:3px;background:#fff"></div>
<div style="left:71px;top:268px;width:1px;height:3px;background:#fff"></div>
<div style="left:78px;top:268px;width:1px;height:3px;background:#fff"></div>
<div style="left:96px;top:268px;width:1px;height:3px;background:#fff"></div>
<div style="left:103px;top:268px;width:1px;height:3px;background:#fff"></div>
<div style="left:110px;top:268px;width:1px;height:3px;background:#fff"></div>
<div style="left:117px;top:268px;width:1px;height:3px;background:#fff"></div>
<div style="left:125px;top:268px;width:1px;height:3px;background:#fff"></div>
<div style="left:50px;top:266px;width:1px;height:5px;background:#fff"></div>
<div style="left:125px;top:266px;width:1px;height:5px;background:#fff"></div>
<svg style="left:80px;top:264px;" width="13" height="15" viewBox="0 0 13 15"><path d="M1.5 4 Q1.5 1 4.5 1 H8.5 Q11.5 1 11.5 4 V9 L6.5 14 L1.5 9Z" fill="#f4f4f8" stroke="#111" stroke-width="1.1"/><path d="M3 3.2 H10 V9 L6.5 12 L3 9Z" fill="#c4c4e4"/><path d="M5 6h3M5 8.2h3" stroke="#fff" stroke-width="0.9"/></svg>
<span style="left:50px;top:257.54px;font-size:10px;line-height:10px;font-family:'Liberation Sans',sans-serif;color:#111">–</span>
<span style="left:117px;top:256.69px;font-size:11px;line-height:11px;font-family:'Liberation Sans',sans-serif;color:#111">+</span>
<div style="left:50px;top:303px;width:76px;height:1px;background:#9a9ab0"></div>
<div style="left:50px;top:298px;width:1px;height:3px;background:#fff"></div>
<div style="left:57px;top:298px;width:1px;height:3px;background:#fff"></div>
<div style="left:64px;top:298px;width:1px;height:3px;background:#fff"></div>
<div style="left:71px;top:298px;width:1px;height:3px;background:#fff"></div>
<div style="left:78px;top:298px;width:1px;height:3px;background:#fff"></div>
<div style="left:96px;top:298px;width:1px;height:3px;background:#fff"></div>
<div style="left:103px;top:298px;width:1px;height:3px;background:#fff"></div>
<div style="left:110px;top:298px;width:1px;height:3px;background:#fff"></div>
<div style="left:117px;top:298px;width:1px;height:3px;background:#fff"></div>
<div style="left:125px;top:298px;width:1px;height:3px;background:#fff"></div>
<div style="left:50px;top:296px;width:1px;height:5px;background:#fff"></div>
<div style="left:125px;top:296px;width:1px;height:5px;background:#fff"></div>
<svg style="left:80px;top:294px;" width="13" height="15" viewBox="0 0 13 15"><path d="M1.5 4 Q1.5 1 4.5 1 H8.5 Q11.5 1 11.5 4 V9 L6.5 14 L1.5 9Z" fill="#f4f4f8" stroke="#111" stroke-width="1.1"/><path d="M3 3.2 H10 V9 L6.5 12 L3 9Z" fill="#c4c4e4"/><path d="M5 6h3M5 8.2h3" stroke="#fff" stroke-width="0.9"/></svg>
<span style="left:50px;top:288.38px;font-size:9px;line-height:9px;font-family:'Liberation Sans',sans-serif;color:#111">L</span>
<span style="left:117px;top:288.38px;font-size:9px;line-height:9px;font-family:'Liberation Sans',sans-serif;color:#111">R</span>
<div style="left:58px;top:462px;width:61px;height:18px;background:#c4c4d4;box-shadow:inset 1px 1px 0 #fff,inset -1px 0 0 #9a9ab0"></div>
<svg style="left:80px;top:466px;" width="16" height="9" viewBox="0 0 16 9"><path d="M8 1 L14 7 H2Z" fill="#a8a8bc"/></svg>
<div style="left:134px;top:187px;width:1px;height:293px;background:#111"></div>
<div style="left:135px;top:187px;width:35px;height:143px;background:#c4c4d4"></div>
<div style="left:135px;top:187px;width:35px;height:1px;background:#fff"></div>
<div style="left:135px;top:187px;width:1px;height:143px;background:#fff"></div>
<div style="left:170px;top:187px;width:1px;height:143px;background:#9a9ab0"></div>
<span style="left:-35.5px;width:200px;text-align:right;top:189.00px;font-size:13px;line-height:13px;font-family:'Liberation Sans',sans-serif;color:#111;font-weight:bold">1.0</span>
<div style="left:166px;top:223px;width:4px;height:1px;background:#111"></div>
<span style="left:-36.5px;width:200px;text-align:right;top:217.00px;font-size:13px;line-height:13px;font-family:'Liberation Sans',sans-serif;color:#111;">0.5</span>
<div style="left:165px;top:258px;width:5px;height:1px;background:#111"></div>
<span style="left:-35.5px;width:200px;text-align:right;top:252.00px;font-size:13px;line-height:13px;font-family:'Liberation Sans',sans-serif;color:#111;font-weight:bold">0.0</span>
<div style="left:166px;top:293px;width:4px;height:1px;background:#111"></div>
<span style="left:-36.5px;width:200px;text-align:right;top:287.00px;font-size:13px;line-height:13px;font-family:'Liberation Sans',sans-serif;color:#111;">–0.5</span>
<span style="left:-35.5px;width:200px;text-align:right;top:315.00px;font-size:13px;line-height:13px;font-family:'Liberation Sans',sans-serif;color:#111;font-weight:bold">-1.0</span>
<div style="left:135px;top:329px;width:35px;height:1px;background:#9a9ab0"></div>
<div style="left:135px;top:330px;width:35px;height:7px;background:#c4c4d4"></div>
<div style="left:135px;top:337px;width:35px;height:143px;background:#c4c4d4"></div>
<div style="left:135px;top:337px;width:35px;height:1px;background:#fff"></div>
<div style="left:135px;top:337px;width:1px;height:143px;background:#fff"></div>
<div style="left:170px;top:337px;width:1px;height:143px;background:#9a9ab0"></div>
<span style="left:-35.5px;width:200px;text-align:right;top:339.00px;font-size:13px;line-height:13px;font-family:'Liberation Sans',sans-serif;color:#111;font-weight:bold">1.0</span>
<div style="left:166px;top:373px;width:4px;height:1px;background:#111"></div>
<span style="left:-36.5px;width:200px;text-align:right;top:367.00px;font-size:13px;line-height:13px;font-family:'Liberation Sans',sans-serif;color:#111;">0.5</span>
<div style="left:165px;top:408px;width:5px;height:1px;background:#111"></div>
<span style="left:-35.5px;width:200px;text-align:right;top:402.00px;font-size:13px;line-height:13px;font-family:'Liberation Sans',sans-serif;color:#111;font-weight:bold">0.0</span>
<div style="left:166px;top:443px;width:4px;height:1px;background:#111"></div>
<span style="left:-36.5px;width:200px;text-align:right;top:437.00px;font-size:13px;line-height:13px;font-family:'Liberation Sans',sans-serif;color:#111;">–0.5</span>
<span style="left:-35.5px;width:200px;text-align:right;top:465.00px;font-size:13px;line-height:13px;font-family:'Liberation Sans',sans-serif;color:#111;font-weight:bold">-1.0</span>
<div style="left:171px;top:187px;width:739px;height:143px;background:#cccccc"></div>
<div style="left:171px;top:337px;width:739px;height:143px;background:#cccccc"></div>
<div style="left:596px;top:187px;width:84px;height:143px;background:#a9a9bd"></div>
<div style="left:596px;top:337px;width:84px;height:143px;background:#a9a9bd"></div>
<div style="left:170px;top:330px;width:740px;height:1px;background:#111"></div>
<div style="left:170px;top:331px;width:740px;height:5px;background:#a1a1b5"></div>
<div style="left:170px;top:336px;width:740px;height:1px;background:#111"></div>
<div style="left:910px;top:187px;width:1px;height:293px;background:#111"></div>
<svg style="left:171px;top:187px" width="739" height="293" viewBox="171 187 739 293"><g><rect x="171" y="258" width="739" height="1" fill="#3c3cd0"/><polygon points="223,241 224,241 224,237 225,237 225,237 226,237 226,235 227,235 227,235 228,235 228,235 229,235 229,235 230,235 230,235 231,235 231,236 232,236 232,236 233,236 233,237 234,237 234,237 235,237 235,236 236,236 236,237 237,237 237,236 238,236 238,237 239,237 239,237 240,237 240,237 241,237 241,238 242,238 242,238 243,238 243,238 244,238 244,239 245,239 245,239 246,239 246,240 247,240 247,241 248,241 248,241 249,241 249,241 250,241 250,241 251,241 251,241 252,241 252,242 253,242 253,243 254,243 254,243 255,243 255,243 256,243 256,244 257,244 257,244 258,244 258,243 259,243 259,245 260,245 260,246 261,246 261,245 262,245 262,245 263,245 263,246 264,246 264,246 265,246 265,247 266,247 266,248 267,248 267,248 268,248 268,250 269,250 269,252 270,252 270,252 271,252 271,253 272,253 272,255 273,255 273,255 274,255 274,256 275,256 275,258 276,258 276,259 275,259 275,259 274,259 274,260 273,260 273,261 272,261 272,262 271,262 271,262 270,262 270,263 269,263 269,264 268,264 268,263 267,263 267,264 266,264 266,264 265,264 265,265 264,265 264,264 263,264 263,265 262,265 262,266 261,266 261,265 260,265 260,267 259,267 259,267 258,267 258,267 257,267 257,267 256,267 256,267 255,267 255,267 254,267 254,267 253,267 253,268 252,268 252,268 251,268 251,268 250,268 250,269 249,269 249,268 248,268 248,268 247,268 247,270 246,270 246,270 245,270 245,270 244,270 244,270 243,270 243,270 242,270 242,270 241,270 241,270 240,270 240,270 239,270 239,271 238,271 238,272 237,272 237,273 236,273 236,272 235,272 235,272 234,272 234,272 233,272 233,273 232,273 232,274 231,274 231,273 230,273 230,274 229,274 229,273 228,273 228,274 227,274 227,275 226,275 226,276 225,276 225,276 224,276 224,271 223,271" fill="#4842d2"/><polygon points="224,246 225,246 225,246 226,246 226,246 227,246 227,246 228,246 228,246 229,246 229,246 230,246 230,246 231,246 231,246 232,246 232,246 233,246 233,246 234,246 234,246 235,246 235,246 236,246 236,246 237,246 237,246 238,246 238,246 239,246 239,247 240,247 240,247 241,247 241,247 242,247 242,248 243,248 243,248 244,248 244,247 245,247 245,248 246,248 246,249 247,249 247,248 248,248 248,249 249,249 249,249 250,249 250,249 251,249 251,250 252,250 252,249 253,249 253,250 254,250 254,250 255,250 255,250 256,250 256,251 257,251 257,251 258,251 258,252 259,252 259,251 260,251 260,252 261,252 261,252 262,252 262,252 263,252 263,253 264,253 264,253 265,253 265,254 266,254 266,253 267,253 267,254 268,254 268,255 269,255 269,255 270,255 270,255 271,255 271,255 272,255 272,257 273,257 273,257 274,257 274,257 275,257 275,259 274,259 274,260 273,260 273,261 272,261 272,261 271,261 271,262 270,262 270,262 269,262 269,263 268,263 268,262 267,262 267,263 266,263 266,263 265,263 265,264 264,264 264,264 263,264 263,264 262,264 262,264 261,264 261,264 260,264 260,265 259,265 259,266 258,266 258,266 257,266 257,266 256,266 256,266 255,266 255,266 254,266 254,267 253,267 253,266 252,266 252,267 251,267 251,267 250,267 250,267 249,267 249,267 248,267 248,268 247,268 247,267 246,267 246,268 245,268 245,268 244,268 244,268 243,268 243,269 242,269 242,268 241,268 241,269 240,269 240,269 239,269 239,270 238,270 238,269 237,269 237,269 236,269 236,269 235,269 235,269 234,269 234,269 233,269 233,270 232,270 232,270 231,270 231,271 230,271 230,271 229,271 229,270 228,270 228,270 227,270 227,270 226,270 226,270 225,270 225,270 224,270" fill="#7a77e0"/><polygon points="422,247 423,247 423,222 424,222 424,216 425,216 425,213 426,213 426,211 427,211 427,211 428,211 428,208 429,208 429,209 430,209 430,207 431,207 431,206 432,206 432,207 433,207 433,206 434,206 434,206 435,206 435,207 436,207 436,206 437,206 437,206 438,206 438,207 439,207 439,207 440,207 440,208 441,208 441,210 442,210 442,211 443,211 443,215 444,215 444,215 445,215 445,214 446,214 446,213 447,213 447,214 448,214 448,215 449,215 449,215 450,215 450,216 451,216 451,216 452,216 452,217 453,217 453,219 454,219 454,219 455,219 455,221 456,221 456,221 457,221 457,224 458,224 458,228 459,228 459,230 460,230 460,231 461,231 461,232 462,232 462,232 463,232 463,233 464,233 464,232 465,232 465,232 466,232 466,234 467,234 467,238 468,238 468,239 469,239 469,241 470,241 470,243 471,243 471,243 472,243 472,245 473,245 473,247 474,247 474,249 475,249 475,253 476,253 476,256 477,256 477,259 476,259 476,262 475,262 475,265 474,265 474,269 473,269 473,269 472,269 472,272 471,272 471,273 470,273 470,273 469,273 469,276 468,276 468,278 467,278 467,279 466,279 466,279 465,279 465,280 464,280 464,280 463,280 463,282 462,282 462,282 461,282 461,283 460,283 460,284 459,284 459,284 458,284 458,285 457,285 457,285 456,285 456,286 455,286 455,287 454,287 454,287 453,287 453,287 452,287 452,288 451,288 451,288 450,288 450,288 449,288 449,289 448,289 448,289 447,289 447,290 446,290 446,289 445,289 445,289 444,289 444,290 443,290 443,292 442,292 442,292 441,292 441,292 440,292 440,293 439,293 439,293 438,293 438,294 437,294 437,293 436,293 436,293 435,293 435,294 434,294 434,294 433,294 433,293 432,293 432,292 431,292 431,292 430,292 430,292 429,292 429,292 428,292 428,291 427,291 427,287 426,287 426,284 425,284 425,282 424,282 424,276 423,276 423,269 422,269" fill="#4842d2"/><polygon points="422,248 423,248 423,246 424,246 424,243 425,243 425,241 426,241 426,239 427,239 427,240 428,240 428,239 429,239 429,238 430,238 430,238 431,238 431,238 432,238 432,238 433,238 433,237 434,237 434,237 435,237 435,237 436,237 436,237 437,237 437,236 438,236 438,237 439,237 439,237 440,237 440,237 441,237 441,237 442,237 442,238 443,238 443,238 444,238 444,238 445,238 445,238 446,238 446,238 447,238 447,239 448,239 448,239 449,239 449,239 450,239 450,239 451,239 451,240 452,240 452,240 453,240 453,240 454,240 454,241 455,241 455,241 456,241 456,241 457,241 457,241 458,241 458,242 459,242 459,242 460,242 460,243 461,243 461,243 462,243 462,243 463,243 463,244 464,244 464,245 465,245 465,245 466,245 466,247 467,247 467,247 468,247 468,247 469,247 469,248 470,248 470,249 471,249 471,250 472,250 472,251 473,251 473,253 474,253 474,254 475,254 475,256 476,256 476,258 477,258 477,259 476,259 476,260 475,260 475,262 474,262 474,264 473,264 473,266 472,266 472,266 471,266 471,267 470,267 470,267 469,267 469,268 468,268 468,269 467,269 467,270 466,270 466,271 465,271 465,271 464,271 464,272 463,272 463,272 462,272 462,273 461,273 461,273 460,273 460,274 459,274 459,275 458,275 458,275 457,275 457,275 456,275 456,275 455,275 455,276 454,276 454,276 453,276 453,277 452,277 452,277 451,277 451,277 450,277 450,278 449,278 449,278 448,278 448,278 447,278 447,278 446,278 446,278 445,278 445,279 444,279 444,279 443,279 443,280 442,280 442,279 441,279 441,280 440,280 440,280 439,280 439,280 438,280 438,280 437,280 437,280 436,280 436,279 435,279 435,279 434,279 434,279 433,279 433,278 432,278 432,279 431,279 431,278 430,278 430,278 429,278 429,277 428,277 428,278 427,278 427,278 426,278 426,276 425,276 425,273 424,273 424,271 423,271 423,268 422,268" fill="#7a77e0"/><polygon points="609,238 610,238 610,225 611,225 611,217 612,217 612,214 613,214 613,212 614,212 614,211 615,211 615,210 616,210 616,209 617,209 617,210 618,210 618,211 619,211 619,212 620,212 620,215 621,215 621,216 622,216 622,217 623,217 623,218 624,218 624,219 625,219 625,220 626,220 626,220 627,220 627,220 628,220 628,220 629,220 629,221 630,221 630,223 631,223 631,223 632,223 632,224 633,224 633,225 634,225 634,225 635,225 635,226 636,226 636,226 637,226 637,225 638,225 638,226 639,226 639,226 640,226 640,225 641,225 641,225 642,225 642,226 643,226 643,226 644,226 644,227 645,227 645,229 646,229 646,231 647,231 647,231 648,231 648,234 649,234 649,235 650,235 650,236 651,236 651,238 652,238 652,240 653,240 653,241 654,241 654,241 655,241 655,244 656,244 656,244 657,244 657,244 658,244 658,244 659,244 659,245 660,245 660,247 661,247 661,247 662,247 662,247 663,247 663,247 664,247 664,248 665,248 665,248 666,248 666,249 667,249 667,250 668,250 668,251 669,251 669,251 670,251 670,253 671,253 671,255 672,255 672,256 673,256 673,256 674,256 674,258 675,258 675,259 674,259 674,259 673,259 673,260 672,260 672,262 671,262 671,262 670,262 670,264 669,264 669,265 668,265 668,265 667,265 667,265 666,265 666,266 665,266 665,266 664,266 664,268 663,268 663,268 662,268 662,269 661,269 661,268 660,268 660,270 659,270 659,270 658,270 658,272 657,272 657,271 656,271 656,273 655,273 655,272 654,272 654,274 653,274 653,273 652,273 652,273 651,273 651,274 650,274 650,274 649,274 649,276 648,276 648,275 647,275 647,276 646,276 646,277 645,277 645,277 644,277 644,278 643,278 643,279 642,279 642,280 641,280 641,280 640,280 640,282 639,282 639,281 638,281 638,282 637,282 637,283 636,283 636,283 635,283 635,284 634,284 634,285 633,285 633,284 632,284 632,286 631,286 631,286 630,286 630,287 629,287 629,287 628,287 628,287 627,287 627,288 626,288 626,289 625,289 625,290 624,290 624,290 623,290 623,291 622,291 622,292 621,292 621,292 620,292 620,293 619,293 619,292 618,292 618,290 617,290 617,289 616,289 616,289 615,289 615,286 614,286 614,284 613,284 613,282 612,282 612,279 611,279 611,276 610,276 610,269 609,269" fill="#4842d2"/><polygon points="609,245 610,245 610,243 611,243 611,241 612,241 612,240 613,240 613,240 614,240 614,239 615,239 615,239 616,239 616,239 617,239 617,238 618,238 618,239 619,239 619,239 620,239 620,239 621,239 621,239 622,239 622,239 623,239 623,240 624,240 624,239 625,239 625,239 626,239 626,240 627,240 627,240 628,240 628,240 629,240 629,240 630,240 630,240 631,240 631,241 632,241 632,241 633,241 633,241 634,241 634,241 635,241 635,241 636,241 636,242 637,242 637,242 638,242 638,242 639,242 639,242 640,242 640,243 641,243 641,243 642,243 642,244 643,244 643,244 644,244 644,245 645,245 645,245 646,245 646,245 647,245 647,246 648,246 648,246 649,246 649,246 650,246 650,247 651,247 651,247 652,247 652,247 653,247 653,248 654,248 654,249 655,249 655,248 656,248 656,249 657,249 657,249 658,249 658,249 659,249 659,249 660,249 660,249 661,249 661,250 662,250 662,251 663,251 663,250 664,250 664,251 665,251 665,251 666,251 666,252 667,252 667,252 668,252 668,253 669,253 669,254 670,254 670,255 671,255 671,256 672,256 672,256 673,256 673,258 674,258 674,259 673,259 673,259 672,259 672,260 671,260 671,261 670,261 670,261 669,261 669,261 668,261 668,261 667,261 667,262 666,262 666,262 665,262 665,263 664,263 664,263 663,263 663,263 662,263 662,264 661,264 661,264 660,264 660,264 659,264 659,265 658,265 658,265 657,265 657,266 656,266 656,265 655,265 655,266 654,266 654,267 653,267 653,267 652,267 652,267 651,267 651,268 650,268 650,268 649,268 649,268 648,268 648,269 647,269 647,269 646,269 646,269 645,269 645,270 644,270 644,270 643,270 643,270 642,270 642,271 641,271 641,271 640,271 640,272 639,272 639,272 638,272 638,273 637,273 637,273 636,273 636,273 635,273 635,273 634,273 634,274 633,274 633,275 632,275 632,274 631,274 631,275 630,275 630,275 629,275 629,275 628,275 628,276 627,276 627,276 626,276 626,277 625,277 625,276 624,276 624,276 623,276 623,277 622,277 622,278 621,278 621,278 620,278 620,277 619,277 619,278 618,278 618,278 617,278 617,277 616,277 616,277 615,277 615,276 614,276 614,276 613,276 613,276 612,276 612,274 611,274 611,270 610,270 610,267 609,267" fill="#7a77e0"/><polygon points="791,235 792,235 792,224 793,224 793,220 794,220 794,219 795,219 795,217 796,217 796,217 797,217 797,216 798,216 798,216 799,216 799,214 800,214 800,214 801,214 801,213 802,213 802,211 803,211 803,213 804,213 804,215 805,215 805,216 806,216 806,217 807,217 807,217 808,217 808,218 809,218 809,220 810,220 810,222 811,222 811,225 812,225 812,226 813,226 813,228 814,228 814,228 815,228 815,230 816,230 816,231 817,231 817,231 818,231 818,231 819,231 819,232 820,232 820,233 821,233 821,234 822,234 822,233 823,233 823,234 824,234 824,232 825,232 825,233 826,233 826,233 827,233 827,234 828,234 828,234 829,234 829,235 830,235 830,234 831,234 831,236 832,236 832,236 833,236 833,236 834,236 834,239 835,239 835,238 836,238 836,240 837,240 837,240 838,240 838,243 839,243 839,244 840,244 840,245 841,245 841,247 842,247 842,248 843,248 843,249 844,249 844,251 845,251 845,252 846,252 846,254 847,254 847,255 848,255 848,255 849,255 849,257 850,257 850,258 849,258 849,260 848,260 848,261 847,261 847,263 846,263 846,264 845,264 845,264 844,264 844,266 843,266 843,266 842,266 842,268 841,268 841,269 840,269 840,269 839,269 839,271 838,271 838,271 837,271 837,271 836,271 836,272 835,272 835,273 834,273 834,273 833,273 833,275 832,275 832,274 831,274 831,274 830,274 830,275 829,275 829,277 828,277 828,276 827,276 827,277 826,277 826,279 825,279 825,279 824,279 824,279 823,279 823,280 822,280 822,280 821,280 821,280 820,280 820,281 819,281 819,281 818,281 818,282 817,282 817,286 816,286 816,288 815,288 815,290 814,290 814,290 813,290 813,291 812,291 812,291 811,291 811,291 810,291 810,291 809,291 809,293 808,293 808,292 807,292 807,294 806,294 806,293 805,293 805,293 804,293 804,295 803,295 803,295 802,295 802,294 801,294 801,293 800,293 800,292 799,292 799,292 798,292 798,291 797,291 797,290 796,290 796,288 795,288 795,288 794,288 794,283 793,283 793,275 792,275 792,272 791,272" fill="#4842d2"/><polygon points="791,242 792,242 792,241 793,241 793,239 794,239 794,239 795,239 795,239 796,239 796,238 797,238 797,238 798,238 798,238 799,238 799,238 800,238 800,238 801,238 801,238 802,238 802,238 803,238 803,238 804,238 804,238 805,238 805,239 806,239 806,239 807,239 807,239 808,239 808,240 809,240 809,240 810,240 810,241 811,241 811,241 812,241 812,242 813,242 813,242 814,242 814,243 815,243 815,242 816,242 816,243 817,243 817,244 818,244 818,244 819,244 819,244 820,244 820,244 821,244 821,245 822,245 822,245 823,245 823,245 824,245 824,245 825,245 825,245 826,245 826,246 827,246 827,246 828,246 828,247 829,247 829,247 830,247 830,247 831,247 831,247 832,247 832,248 833,248 833,248 834,248 834,248 835,248 835,249 836,249 836,249 837,249 837,249 838,249 838,250 839,250 839,251 840,251 840,251 841,251 841,251 842,251 842,251 843,251 843,252 844,252 844,253 845,253 845,254 846,254 846,255 847,255 847,256 848,256 848,257 849,257 849,258 850,258 850,259 849,259 849,260 848,260 848,262 847,262 847,263 846,263 846,263 845,263 845,264 844,264 844,264 843,264 843,264 842,264 842,264 841,264 841,264 840,264 840,265 839,265 839,265 838,265 838,265 837,265 837,266 836,266 836,266 835,266 835,267 834,267 834,266 833,266 833,267 832,267 832,267 831,267 831,268 830,268 830,268 829,268 829,268 828,268 828,269 827,269 827,269 826,269 826,270 825,270 825,270 824,270 824,270 823,270 823,271 822,271 822,271 821,271 821,272 820,272 820,272 819,272 819,272 818,272 818,273 817,273 817,273 816,273 816,273 815,273 815,274 814,274 814,275 813,275 813,274 812,274 812,275 811,275 811,275 810,275 810,277 809,277 809,276 808,276 808,277 807,277 807,277 806,277 806,278 805,278 805,278 804,278 804,278 803,278 803,279 802,279 802,279 801,279 801,279 800,279 800,278 799,278 799,278 798,278 798,278 797,278 797,278 796,278 796,278 795,278 795,277 794,277 794,275 793,275 793,273 792,273 792,273 791,273" fill="#7a77e0"/><rect x="211" y="255" width="1" height="8" fill="#4842d2"/><rect x="212" y="253" width="1" height="12" fill="#4842d2"/><rect x="213" y="249" width="1" height="16" fill="#4842d2"/><rect x="214" y="253" width="1" height="14" fill="#4842d2"/><rect x="215" y="250" width="1" height="16" fill="#4842d2"/><rect x="216" y="248" width="1" height="18" fill="#4842d2"/><rect x="217" y="252" width="1" height="12" fill="#4842d2"/><rect x="218" y="250" width="1" height="15" fill="#4842d2"/><rect x="219" y="251" width="1" height="15" fill="#4842d2"/><rect x="220" y="253" width="1" height="11" fill="#4842d2"/><rect x="221" y="254" width="1" height="8" fill="#4842d2"/><rect x="222" y="254" width="1" height="8" fill="#4842d2"/><rect x="211" y="254" width="12" height="8" fill="#7a77e0" opacity="0.9"/><path d="M596 258.5 L598 257 L599 260 L601 254 L602 263 L603 252 L604 265 L605 254 L606 262 L607 256 L608.5 260 L609.5 258.5" stroke="#4842d2" stroke-width="1.1" fill="none"/><path d="M276 258.5 l3 -1.5 l3 2 l3 -1 l2 1.5 l3 -1 l3 1 l3 0 M406 258.5 l2 -2 l2 3 l2 -2.5 l2 2.5 l2 -2 l2 2.5 l2 -2 M478 258.5 l2 -1.5 l2 2.5 l2 -1 M692 258.5 l1.5 -1.5 l1 2 M737 258.5 l1 -2.5 l1 3.5 l1 -1 M776 258.5 l1.5 -3 l1.5 5 l1.5 -5 l1.5 5 l1.5 -4 l1.5 4 l1.5 -3 l1.5 3 l1.5 -2" stroke="#4842d2" stroke-width="1.2" fill="none"/></g><g transform="translate(0,150)"><rect x="171" y="258" width="739" height="1" fill="#3c3cd0"/><polygon points="223,241 224,241 224,237 225,237 225,237 226,237 226,235 227,235 227,235 228,235 228,235 229,235 229,235 230,235 230,235 231,235 231,236 232,236 232,236 233,236 233,237 234,237 234,237 235,237 235,236 236,236 236,237 237,237 237,236 238,236 238,237 239,237 239,237 240,237 240,237 241,237 241,238 242,238 242,238 243,238 243,238 244,238 244,239 245,239 245,239 246,239 246,240 247,240 247,241 248,241 248,241 249,241 249,241 250,241 250,241 251,241 251,241 252,241 252,242 253,242 253,243 254,243 254,243 255,243 255,243 256,243 256,244 257,244 257,244 258,244 258,243 259,243 259,245 260,245 260,246 261,246 261,245 262,245 262,245 263,245 263,246 264,246 264,246 265,246 265,247 266,247 266,248 267,248 267,248 268,248 268,250 269,250 269,252 270,252 270,252 271,252 271,253 272,253 272,255 273,255 273,255 274,255 274,256 275,256 275,258 276,258 276,259 275,259 275,259 274,259 274,260 273,260 273,261 272,261 272,262 271,262 271,262 270,262 270,263 269,263 269,264 268,264 268,263 267,263 267,264 266,264 266,264 265,264 265,265 264,265 264,264 263,264 263,265 262,265 262,266 261,266 261,265 260,265 260,267 259,267 259,267 258,267 258,267 257,267 257,267 256,267 256,267 255,267 255,267 254,267 254,267 253,267 253,268 252,268 252,268 251,268 251,268 250,268 250,269 249,269 249,268 248,268 248,268 247,268 247,270 246,270 246,270 245,270 245,270 244,270 244,270 243,270 243,270 242,270 242,270 241,270 241,270 240,270 240,270 239,270 239,271 238,271 238,272 237,272 237,273 236,273 236,272 235,272 235,272 234,272 234,272 233,272 233,273 232,273 232,274 231,274 231,273 230,273 230,274 229,274 229,273 228,273 228,274 227,274 227,275 226,275 226,276 225,276 225,276 224,276 224,271 223,271" fill="#4842d2"/><polygon points="224,246 225,246 225,246 226,246 226,246 227,246 227,246 228,246 228,246 229,246 229,246 230,246 230,246 231,246 231,246 232,246 232,246 233,246 233,246 234,246 234,246 235,246 235,246 236,246 236,246 237,246 237,246 238,246 238,246 239,246 239,247 240,247 240,247 241,247 241,247 242,247 242,248 243,248 243,248 244,248 244,247 245,247 245,248 246,248 246,249 247,249 247,248 248,248 248,249 249,249 249,249 250,249 250,249 251,249 251,250 252,250 252,249 253,249 253,250 254,250 254,250 255,250 255,250 256,250 256,251 257,251 257,251 258,251 258,252 259,252 259,251 260,251 260,252 261,252 261,252 262,252 262,252 263,252 263,253 264,253 264,253 265,253 265,254 266,254 266,253 267,253 267,254 268,254 268,255 269,255 269,255 270,255 270,255 271,255 271,255 272,255 272,257 273,257 273,257 274,257 274,257 275,257 275,259 274,259 274,260 273,260 273,261 272,261 272,261 271,261 271,262 270,262 270,262 269,262 269,263 268,263 268,262 267,262 267,263 266,263 266,263 265,263 265,264 264,264 264,264 263,264 263,264 262,264 262,264 261,264 261,264 260,264 260,265 259,265 259,266 258,266 258,266 257,266 257,266 256,266 256,266 255,266 255,266 254,266 254,267 253,267 253,266 252,266 252,267 251,267 251,267 250,267 250,267 249,267 249,267 248,267 248,268 247,268 247,267 246,267 246,268 245,268 245,268 244,268 244,268 243,268 243,269 242,269 242,268 241,268 241,269 240,269 240,269 239,269 239,270 238,270 238,269 237,269 237,269 236,269 236,269 235,269 235,269 234,269 234,269 233,269 233,270 232,270 232,270 231,270 231,271 230,271 230,271 229,271 229,270 228,270 228,270 227,270 227,270 226,270 226,270 225,270 225,270 224,270" fill="#7a77e0"/><polygon points="422,247 423,247 423,222 424,222 424,216 425,216 425,213 426,213 426,211 427,211 427,211 428,211 428,208 429,208 429,209 430,209 430,207 431,207 431,206 432,206 432,207 433,207 433,206 434,206 434,206 435,206 435,207 436,207 436,206 437,206 437,206 438,206 438,207 439,207 439,207 440,207 440,208 441,208 441,210 442,210 442,211 443,211 443,215 444,215 444,215 445,215 445,214 446,214 446,213 447,213 447,214 448,214 448,215 449,215 449,215 450,215 450,216 451,216 451,216 452,216 452,217 453,217 453,219 454,219 454,219 455,219 455,221 456,221 456,221 457,221 457,224 458,224 458,228 459,228 459,230 460,230 460,231 461,231 461,232 462,232 462,232 463,232 463,233 464,233 464,232 465,232 465,232 466,232 466,234 467,234 467,238 468,238 468,239 469,239 469,241 470,241 470,243 471,243 471,243 472,243 472,245 473,245 473,247 474,247 474,249 475,249 475,253 476,253 476,256 477,256 477,259 476,259 476,262 475,262 475,265 474,265 474,269 473,269 473,269 472,269 472,272 471,272 471,273 470,273 470,273 469,273 469,276 468,276 468,278 467,278 467,279 466,279 466,279 465,279 465,280 464,280 464,280 463,280 463,282 462,282 462,282 461,282 461,283 460,283 460,284 459,284 459,284 458,284 458,285 457,285 457,285 456,285 456,286 455,286 455,287 454,287 454,287 453,287 453,287 452,287 452,288 451,288 451,288 450,288 450,288 449,288 449,289 448,289 448,289 447,289 447,290 446,290 446,289 445,289 445,289 444,289 444,290 443,290 443,292 442,292 442,292 441,292 441,292 440,292 440,293 439,293 439,293 438,293 438,294 437,294 437,293 436,293 436,293 435,293 435,294 434,294 434,294 433,294 433,293 432,293 432,292 431,292 431,292 430,292 430,292 429,292 429,292 428,292 428,291 427,291 427,287 426,287 426,284 425,284 425,282 424,282 424,276 423,276 423,269 422,269" fill="#4842d2"/><polygon points="422,248 423,248 423,246 424,246 424,243 425,243 425,241 426,241 426,239 427,239 427,240 428,240 428,239 429,239 429,238 430,238 430,238 431,238 431,238 432,238 432,238 433,238 433,237 434,237 434,237 435,237 435,237 436,237 436,237 437,237 437,236 438,236 438,237 439,237 439,237 440,237 440,237 441,237 441,237 442,237 442,238 443,238 443,238 444,238 444,238 445,238 445,238 446,238 446,238 447,238 447,239 448,239 448,239 449,239 449,239 450,239 450,239 451,239 451,240 452,240 452,240 453,240 453,240 454,240 454,241 455,241 455,241 456,241 456,241 457,241 457,241 458,241 458,242 459,242 459,242 460,242 460,243 461,243 461,243 462,243 462,243 463,243 463,244 464,244 464,245 465,245 465,245 466,245 466,247 467,247 467,247 468,247 468,247 469,247 469,248 470,248 470,249 471,249 471,250 472,250 472,251 473,251 473,253 474,253 474,254 475,254 475,256 476,256 476,258 477,258 477,259 476,259 476,260 475,260 475,262 474,262 474,264 473,264 473,266 472,266 472,266 471,266 471,267 470,267 470,267 469,267 469,268 468,268 468,269 467,269 467,270 466,270 466,271 465,271 465,271 464,271 464,272 463,272 463,272 462,272 462,273 461,273 461,273 460,273 460,274 459,274 459,275 458,275 458,275 457,275 457,275 456,275 456,275 455,275 455,276 454,276 454,276 453,276 453,277 452,277 452,277 451,277 451,277 450,277 450,278 449,278 449,278 448,278 448,278 447,278 447,278 446,278 446,278 445,278 445,279 444,279 444,279 443,279 443,280 442,280 442,279 441,279 441,280 440,280 440,280 439,280 439,280 438,280 438,280 437,280 437,280 436,280 436,279 435,279 435,279 434,279 434,279 433,279 433,278 432,278 432,279 431,279 431,278 430,278 430,278 429,278 429,277 428,277 428,278 427,278 427,278 426,278 426,276 425,276 425,273 424,273 424,271 423,271 423,268 422,268" fill="#7a77e0"/><polygon points="609,238 610,238 610,225 611,225 611,217 612,217 612,214 613,214 613,212 614,212 614,211 615,211 615,210 616,210 616,209 617,209 617,210 618,210 618,211 619,211 619,212 620,212 620,215 621,215 621,216 622,216 622,217 623,217 623,218 624,218 624,219 625,219 625,220 626,220 626,220 627,220 627,220 628,220 628,220 629,220 629,221 630,221 630,223 631,223 631,223 632,223 632,224 633,224 633,225 634,225 634,225 635,225 635,226 636,226 636,226 637,226 637,225 638,225 638,226 639,226 639,226 640,226 640,225 641,225 641,225 642,225 642,226 643,226 643,226 644,226 644,227 645,227 645,229 646,229 646,231 647,231 647,231 648,231 648,234 649,234 649,235 650,235 650,236 651,236 651,238 652,238 652,240 653,240 653,241 654,241 654,241 655,241 655,244 656,244 656,244 657,244 657,244 658,244 658,244 659,244 659,245 660,245 660,247 661,247 661,247 662,247 662,247 663,247 663,247 664,247 664,248 665,248 665,248 666,248 666,249 667,249 667,250 668,250 668,251 669,251 669,251 670,251 670,253 671,253 671,255 672,255 672,256 673,256 673,256 674,256 674,258 675,258 675,259 674,259 674,259 673,259 673,260 672,260 672,262 671,262 671,262 670,262 670,264 669,264 669,265 668,265 668,265 667,265 667,265 666,265 666,266 665,266 665,266 664,266 664,268 663,268 663,268 662,268 662,269 661,269 661,268 660,268 660,270 659,270 659,270 658,270 658,272 657,272 657,271 656,271 656,273 655,273 655,272 654,272 654,274 653,274 653,273 652,273 652,273 651,273 651,274 650,274 650,274 649,274 649,276 648,276 648,275 647,275 647,276 646,276 646,277 645,277 645,277 644,277 644,278 643,278 643,279 642,279 642,280 641,280 641,280 640,280 640,282 639,282 639,281 638,281 638,282 637,282 637,283 636,283 636,283 635,283 635,284 634,284 634,285 633,285 633,284 632,284 632,286 631,286 631,286 630,286 630,287 629,287 629,287 628,287 628,287 627,287 627,288 626,288 626,289 625,289 625,290 624,290 624,290 623,290 623,291 622,291 622,292 621,292 621,292 620,292 620,293 619,293 619,292 618,292 618,290 617,290 617,289 616,289 616,289 615,289 615,286 614,286 614,284 613,284 613,282 612,282 612,279 611,279 611,276 610,276 610,269 609,269" fill="#4842d2"/><polygon points="609,245 610,245 610,243 611,243 611,241 612,241 612,240 613,240 613,240 614,240 614,239 615,239 615,239 616,239 616,239 617,239 617,238 618,238 618,239 619,239 619,239 620,239 620,239 621,239 621,239 622,239 622,239 623,239 623,240 624,240 624,239 625,239 625,239 626,239 626,240 627,240 627,240 628,240 628,240 629,240 629,240 630,240 630,240 631,240 631,241 632,241 632,241 633,241 633,241 634,241 634,241 635,241 635,241 636,241 636,242 637,242 637,242 638,242 638,242 639,242 639,242 640,242 640,243 641,243 641,243 642,243 642,244 643,244 643,244 644,244 644,245 645,245 645,245 646,245 646,245 647,245 647,246 648,246 648,246 649,246 649,246 650,246 650,247 651,247 651,247 652,247 652,247 653,247 653,248 654,248 654,249 655,249 655,248 656,248 656,249 657,249 657,249 658,249 658,249 659,249 659,249 660,249 660,249 661,249 661,250 662,250 662,251 663,251 663,250 664,250 664,251 665,251 665,251 666,251 666,252 667,252 667,252 668,252 668,253 669,253 669,254 670,254 670,255 671,255 671,256 672,256 672,256 673,256 673,258 674,258 674,259 673,259 673,259 672,259 672,260 671,260 671,261 670,261 670,261 669,261 669,261 668,261 668,261 667,261 667,262 666,262 666,262 665,262 665,263 664,263 664,263 663,263 663,263 662,263 662,264 661,264 661,264 660,264 660,264 659,264 659,265 658,265 658,265 657,265 657,266 656,266 656,265 655,265 655,266 654,266 654,267 653,267 653,267 652,267 652,267 651,267 651,268 650,268 650,268 649,268 649,268 648,268 648,269 647,269 647,269 646,269 646,269 645,269 645,270 644,270 644,270 643,270 643,270 642,270 642,271 641,271 641,271 640,271 640,272 639,272 639,272 638,272 638,273 637,273 637,273 636,273 636,273 635,273 635,273 634,273 634,274 633,274 633,275 632,275 632,274 631,274 631,275 630,275 630,275 629,275 629,275 628,275 628,276 627,276 627,276 626,276 626,277 625,277 625,276 624,276 624,276 623,276 623,277 622,277 622,278 621,278 621,278 620,278 620,277 619,277 619,278 618,278 618,278 617,278 617,277 616,277 616,277 615,277 615,276 614,276 614,276 613,276 613,276 612,276 612,274 611,274 611,270 610,270 610,267 609,267" fill="#7a77e0"/><polygon points="791,235 792,235 792,224 793,224 793,220 794,220 794,219 795,219 795,217 796,217 796,217 797,217 797,216 798,216 798,216 799,216 799,214 800,214 800,214 801,214 801,213 802,213 802,211 803,211 803,213 804,213 804,215 805,215 805,216 806,216 806,217 807,217 807,217 808,217 808,218 809,218 809,220 810,220 810,222 811,222 811,225 812,225 812,226 813,226 813,228 814,228 814,228 815,228 815,230 816,230 816,231 817,231 817,231 818,231 818,231 819,231 819,232 820,232 820,233 821,233 821,234 822,234 822,233 823,233 823,234 824,234 824,232 825,232 825,233 826,233 826,233 827,233 827,234 828,234 828,234 829,234 829,235 830,235 830,234 831,234 831,236 832,236 832,236 833,236 833,236 834,236 834,239 835,239 835,238 836,238 836,240 837,240 837,240 838,240 838,243 839,243 839,244 840,244 840,245 841,245 841,247 842,247 842,248 843,248 843,249 844,249 844,251 845,251 845,252 846,252 846,254 847,254 847,255 848,255 848,255 849,255 849,257 850,257 850,258 849,258 849,260 848,260 848,261 847,261 847,263 846,263 846,264 845,264 845,264 844,264 844,266 843,266 843,266 842,266 842,268 841,268 841,269 840,269 840,269 839,269 839,271 838,271 838,271 837,271 837,271 836,271 836,272 835,272 835,273 834,273 834,273 833,273 833,275 832,275 832,274 831,274 831,274 830,274 830,275 829,275 829,277 828,277 828,276 827,276 827,277 826,277 826,279 825,279 825,279 824,279 824,279 823,279 823,280 822,280 822,280 821,280 821,280 820,280 820,281 819,281 819,281 818,281 818,282 817,282 817,286 816,286 816,288 815,288 815,290 814,290 814,290 813,290 813,291 812,291 812,291 811,291 811,291 810,291 810,291 809,291 809,293 808,293 808,292 807,292 807,294 806,294 806,293 805,293 805,293 804,293 804,295 803,295 803,295 802,295 802,294 801,294 801,293 800,293 800,292 799,292 799,292 798,292 798,291 797,291 797,290 796,290 796,288 795,288 795,288 794,288 794,283 793,283 793,275 792,275 792,272 791,272" fill="#4842d2"/><polygon points="791,242 792,242 792,241 793,241 793,239 794,239 794,239 795,239 795,239 796,239 796,238 797,238 797,238 798,238 798,238 799,238 799,238 800,238 800,238 801,238 801,238 802,238 802,238 803,238 803,238 804,238 804,238 805,238 805,239 806,239 806,239 807,239 807,239 808,239 808,240 809,240 809,240 810,240 810,241 811,241 811,241 812,241 812,242 813,242 813,242 814,242 814,243 815,243 815,242 816,242 816,243 817,243 817,244 818,244 818,244 819,244 819,244 820,244 820,244 821,244 821,245 822,245 822,245 823,245 823,245 824,245 824,245 825,245 825,245 826,245 826,246 827,246 827,246 828,246 828,247 829,247 829,247 830,247 830,247 831,247 831,247 832,247 832,248 833,248 833,248 834,248 834,248 835,248 835,249 836,249 836,249 837,249 837,249 838,249 838,250 839,250 839,251 840,251 840,251 841,251 841,251 842,251 842,251 843,251 843,252 844,252 844,253 845,253 845,254 846,254 846,255 847,255 847,256 848,256 848,257 849,257 849,258 850,258 850,259 849,259 849,260 848,260 848,262 847,262 847,263 846,263 846,263 845,263 845,264 844,264 844,264 843,264 843,264 842,264 842,264 841,264 841,264 840,264 840,265 839,265 839,265 838,265 838,265 837,265 837,266 836,266 836,266 835,266 835,267 834,267 834,266 833,266 833,267 832,267 832,267 831,267 831,268 830,268 830,268 829,268 829,268 828,268 828,269 827,269 827,269 826,269 826,270 825,270 825,270 824,270 824,270 823,270 823,271 822,271 822,271 821,271 821,272 820,272 820,272 819,272 819,272 818,272 818,273 817,273 817,273 816,273 816,273 815,273 815,274 814,274 814,275 813,275 813,274 812,274 812,275 811,275 811,275 810,275 810,277 809,277 809,276 808,276 808,277 807,277 807,277 806,277 806,278 805,278 805,278 804,278 804,278 803,278 803,279 802,279 802,279 801,279 801,279 800,279 800,278 799,278 799,278 798,278 798,278 797,278 797,278 796,278 796,278 795,278 795,277 794,277 794,275 793,275 793,273 792,273 792,273 791,273" fill="#7a77e0"/><rect x="211" y="255" width="1" height="8" fill="#4842d2"/><rect x="212" y="253" width="1" height="12" fill="#4842d2"/><rect x="213" y="249" width="1" height="16" fill="#4842d2"/><rect x="214" y="253" width="1" height="14" fill="#4842d2"/><rect x="215" y="250" width="1" height="16" fill="#4842d2"/><rect x="216" y="248" width="1" height="18" fill="#4842d2"/><rect x="217" y="252" width="1" height="12" fill="#4842d2"/><rect x="218" y="250" width="1" height="15" fill="#4842d2"/><rect x="219" y="251" width="1" height="15" fill="#4842d2"/><rect x="220" y="253" width="1" height="11" fill="#4842d2"/><rect x="221" y="254" width="1" height="8" fill="#4842d2"/><rect x="222" y="254" width="1" height="8" fill="#4842d2"/><rect x="211" y="254" width="12" height="8" fill="#7a77e0" opacity="0.9"/><path d="M596 258.5 L598 257 L599 260 L601 254 L602 263 L603 252 L604 265 L605 254 L606 262 L607 256 L608.5 260 L609.5 258.5" stroke="#4842d2" stroke-width="1.1" fill="none"/><path d="M276 258.5 l3 -1.5 l3 2 l3 -1 l2 1.5 l3 -1 l3 1 l3 0 M406 258.5 l2 -2 l2 3 l2 -2.5 l2 2.5 l2 -2 l2 2.5 l2 -2 M478 258.5 l2 -1.5 l2 2.5 l2 -1 M692 258.5 l1.5 -1.5 l1 2 M737 258.5 l1 -2.5 l1 3.5 l1 -1 M776 258.5 l1.5 -3 l1.5 5 l1.5 -5 l1.5 5 l1.5 -4 l1.5 4 l1.5 -3 l1.5 3 l1.5 -2" stroke="#4842d2" stroke-width="1.2" fill="none"/></g></svg>
<div style="left:916px;top:182px;width:16px;height:309px;background:linear-gradient(90deg,#e6e6e6,#fcfcfc 40%,#f4f4f4)"></div>
<div style="left:917px;top:430px;width:13px;height:28px;border-radius:0 0 6.5px 6.5px;background:linear-gradient(#f6f6f6,#e8e8e8 60%,#cfcfcf);box-shadow:0 1px 0 #b8b8b8"></div>
<div style="left:917px;top:182px;width:13px;height:14px;background:linear-gradient(#e0e0e0,#f8f8f8)"></div>
<div style="left:917px;top:188px;width:12.5px;height:257px;border-radius:6.25px;background:linear-gradient(#2a4fd6,rgba(42,79,214,0) 8px),linear-gradient(0deg,#2a4fd6,rgba(42,79,214,0) 8px),linear-gradient(90deg,#2a4fd6 0%,#4f7fe0 10%,#b0ccf2 16%,#a4c4f0 38%,#5896ea 44%,#74b4f4 68%,#ace2fc 88%,#8cc4f0 100%);box-shadow:0 0 0 0.8px rgba(70,70,90,.55)"></div>
<div style="left:916px;top:459px;width:16px;height:1px;background:#d8d8d8"></div>
<div style="left:916px;top:474px;width:16px;height:1px;background:#d8d8d8"></div>
<svg style="left:916px;top:459px;" width="16" height="31" viewBox="0 0 16 31"><path d="M4 10 L8 4 L12 10Z M4 21 L8 27 L12 21Z" fill="#555"/></svg>
<div style="left:34px;top:491px;width:882px;height:16px;background:#ececec"></div>
<div style="left:170px;top:491px;width:746px;height:16px;background:linear-gradient(#e4e4e4,#fbfbfb 45%,#f4f4f4)"></div>
<div style="left:170px;top:491px;width:1px;height:16px;background:#d0d0d0"></div>
<div style="left:176px;top:491px;width:40px;height:16px;border-radius:8px 0 0 8px;background:linear-gradient(#e8e8e8,#fdfdfd 45%,#f6f6f6);box-shadow:inset 2px 0 2px -1px rgba(0,0,0,.35)"></div>
<div style="left:344px;top:492px;width:61px;height:13px;border-radius:6.5px;background:linear-gradient(90deg,#2a4fd6,rgba(42,79,214,0) 8px),linear-gradient(270deg,#2a4fd6,rgba(42,79,214,0) 8px),linear-gradient(#2a4fd6 0%,#4f7fe0 10%,#b0ccf2 18%,#a4c4f0 40%,#5896ea 48%,#74b4f4 70%,#ace2fc 90%,#8cc4f0 100%);box-shadow:0 0 0 0.8px rgba(70,70,90,.55)"></div>
<div style="left:322px;top:505px;width:64px;height:1px;background:linear-gradient(90deg,rgba(0,0,0,0),rgba(0,0,0,.22) 30%,rgba(0,0,0,.22) 70%,rgba(0,0,0,0))"></div>
<div style="left:348px;top:493.5px;width:53px;height:3.5px;border-radius:2px;background:rgba(255,255,255,.5)"></div>
<div style="left:843px;top:491px;width:41px;height:16px;border-radius:0 8px 8px 0;background:linear-gradient(#e8e8e8,#fdfdfd 45%,#f6f6f6);box-shadow:inset -2px 0 2px -1px rgba(0,0,0,.35)"></div>
<div style="left:884px;top:491px;width:31px;height:16px;background:linear-gradient(#e6e6e6,#fafafa 45%,#f0f0f0)"></div>
<div style="left:884px;top:491px;width:1px;height:16px;background:#d8d8d8"></div>
<div style="left:899px;top:491px;width:1px;height:16px;background:#d8d8d8"></div>
<div style="left:915px;top:491px;width:1px;height:16px;background:#d8d8d8"></div>
<div style="left:916px;top:491px;width:16px;height:16px;background:#ececec"></div>
<svg style="left:884px;top:491px;" width="31" height="16" viewBox="0 0 31 16"><path d="M11 4.5 L5 8 L11 11.5Z M20 4.5 L26 8 L20 11.5Z" fill="#555"/></svg>
<div style="left:34px;top:507px;width:898px;height:1px;background:#a3a3bb"></div>
<div style="left:35px;top:508px;width:10px;height:55px;background:#e3e3e3"></div>
<div style="left:38px;top:513px;width:4px;height:1px;background:#9090b0"></div>
<div style="left:38px;top:517px;width:4px;height:1px;background:#9090b0"></div>
<div style="left:38px;top:521px;width:4px;height:1px;background:#9090b0"></div>
<div style="left:38px;top:525px;width:4px;height:1px;background:#9090b0"></div>
<div style="left:38px;top:529px;width:4px;height:1px;background:#9090b0"></div>
<div style="left:38px;top:533px;width:4px;height:1px;background:#9090b0"></div>
<div style="left:38px;top:537px;width:4px;height:1px;background:#9090b0"></div>
<div style="left:38px;top:541px;width:4px;height:1px;background:#9090b0"></div>
<div style="left:38px;top:545px;width:4px;height:1px;background:#9090b0"></div>
<div style="left:38px;top:549px;width:4px;height:1px;background:#9090b0"></div>
<div style="left:38px;top:553px;width:4px;height:1px;background:#9090b0"></div>
<div style="left:38px;top:557px;width:4px;height:1px;background:#9090b0"></div>
<span style="left:46.5px;top:515.00px;font-size:13px;line-height:13px;font-family:'Liberation Sans',sans-serif;color:#111;letter-spacing:0.35px">Project Rate (Hz):</span>
<div style="left:49px;top:534px;width:52px;height:22px;background:#fff;border:1px solid #a8a8a8;box-shadow:inset 0 1px 1px #ccc"></div>
<span style="left:52px;top:538.50px;font-size:13px;line-height:13px;font-family:'Liberation Sans',sans-serif;color:#111;letter-spacing:0.9px">44100</span>
<div style="left:104px;top:535px;width:20px;height:19px;border-radius:5px;background:linear-gradient(#cfe2fb,#7fb0ee 50%,#5c98e8 55%,#b0d4fb);box-shadow:inset 0 0 0 1px #3a5fb0"></div>
<svg style="left:104px;top:535px;" width="20" height="19" viewBox="0 0 20 19"><path d="M10 4 L13 8 H7Z M10 15 L13 11 H7Z" fill="#111"/></svg>
<div style="left:161px;top:531px;width:1px;height:27px;background:#8c8c8c"></div>
<div style="left:170px;top:539px;width:14px;height:14px;border:1px solid #8c8c8c;border-radius:2px;background:linear-gradient(#fff,#eee 50%,#e2e2e2 55%,#f6f6f6)"></div>
<span style="left:188.5px;top:538.50px;font-size:13px;line-height:13px;font-family:'Liberation Sans',sans-serif;color:#111;letter-spacing:0.7px">Snap To</span>
<span style="left:245px;top:515.00px;font-size:13px;line-height:13px;font-family:'Liberation Sans',sans-serif;color:#111;letter-spacing:0.5px">Selection Start:</span>
<div style="left:372px;top:514px;width:15px;height:15px;border-radius:50%;background:radial-gradient(circle at 50% 70%,#c6e0fb,#7fb0ee 60%,#4f85d8);box-shadow:inset 0 0 0 1px #3f63a8"></div>
<div style="left:377px;top:519px;width:5px;height:5px;border-radius:50%;background:#111"></div>
<span style="left:390.5px;top:515.00px;font-size:13px;line-height:13px;font-family:'Liberation Sans',sans-serif;color:#111">End</span>
<div style="left:420px;top:514px;width:15px;height:15px;border-radius:50%;border:1px solid #8c8c8c;background:linear-gradient(#fff,#eee 50%,#e0e0e0 55%,#f8f8f8)"></div>
<span style="left:439.5px;top:515.00px;font-size:13px;line-height:13px;font-family:'Liberation Sans',sans-serif;color:#111;letter-spacing:0.65px">Length</span>
<div style="left:245px;top:534px;width:119px;height:22px;background:#c9c9c9;border-top:1px solid #7c7c7c;border-left:1px solid #9c9c9c;border-right:1px solid #9c9c9c;border-bottom:1px solid #e0e0e0;box-shadow:inset 1px 0 0 #fff,inset 0 -1px 0 #fff"></div>
<span style="left:248.8px;top:535.60px;font-size:16px;line-height:16px;font-family:'Liberation Serif',serif;color:#0a0ad0;letter-spacing:1.7px">00</span>
<span style="left:272.1px;top:536.44px;font-size:15px;line-height:15px;font-family:'Liberation Serif',serif;color:#111">h</span>
<span style="left:283.9px;top:535.60px;font-size:16px;line-height:16px;font-family:'Liberation Serif',serif;color:#0a0ad0;letter-spacing:1.7px">00</span>
<span style="left:306.6px;top:536.44px;font-size:15px;line-height:15px;font-family:'Liberation Serif',serif;color:#111">m</span>
<span style="left:322.6px;top:535.60px;font-size:16px;line-height:16px;font-family:'Liberation Serif',serif;color:#0a0ad0;letter-spacing:1.7px">27</span>
<span style="left:344.8px;top:536.44px;font-size:15px;line-height:15px;font-family:'Liberation Serif',serif;color:#111">s</span>
<div style="left:353px;top:536px;width:9px;height:18px;background:#c9c9c9;box-shadow:inset 1px 1px 0 #fff,inset -1px -1px 0 #a0a0b8"></div>
<svg style="left:353px;top:536px;" width="9" height="18" viewBox="0 0 9 18"><path d="M0.8 7 H8.2 L4.5 11Z" fill="#111"/></svg>
<div style="left:370px;top:534px;width:119px;height:22px;background:#c9c9c9;border-top:1px solid #7c7c7c;border-left:1px solid #9c9c9c;border-right:1px solid #9c9c9c;border-bottom:1px solid #e0e0e0;box-shadow:inset 1px 0 0 #fff,inset 0 -1px 0 #fff"></div>
<span style="left:373.8px;top:535.60px;font-size:16px;line-height:16px;font-family:'Liberation Serif',serif;color:#0a0ad0;letter-spacing:1.7px">00</span>
<span style="left:397.1px;top:536.44px;font-size:15px;line-height:15px;font-family:'Liberation Serif',serif;color:#111">h</span>
<span style="left:408.9px;top:535.60px;font-size:16px;line-height:16px;font-family:'Liberation Serif',serif;color:#0a0ad0;letter-spacing:1.7px">00</span>
<span style="left:431.6px;top:536.44px;font-size:15px;line-height:15px;font-family:'Liberation Serif',serif;color:#111">m</span>
<span style="left:447.6px;top:535.60px;font-size:16px;line-height:16px;font-family:'Liberation Serif',serif;color:#0a0ad0;letter-spacing:1.7px">28</span>
<span style="left:469.8px;top:536.44px;font-size:15px;line-height:15px;font-family:'Liberation Serif',serif;color:#111">s</span>
<div style="left:478px;top:536px;width:9px;height:18px;background:#c9c9c9;box-shadow:inset 1px 1px 0 #fff,inset -1px -1px 0 #a0a0b8"></div>
<svg style="left:478px;top:536px;" width="9" height="18" viewBox="0 0 9 18"><path d="M0.8 7 H8.2 L4.5 11Z" fill="#111"/></svg>
<div style="left:495px;top:531px;width:1px;height:27px;background:#8c8c8c"></div>
<span style="left:502.5px;top:515.00px;font-size:13px;line-height:13px;font-family:'Liberation Sans',sans-serif;color:#111;letter-spacing:0.65px">Audio Position:</span>
<div style="left:502px;top:534px;width:119px;height:22px;background:#c9c9c9;border-top:1px solid #7c7c7c;border-left:1px solid #9c9c9c;border-right:1px solid #9c9c9c;border-bottom:1px solid #e0e0e0;box-shadow:inset 1px 0 0 #fff,inset 0 -1px 0 #fff"></div>
<span style="left:505.8px;top:535.60px;font-size:16px;line-height:16px;font-family:'Liberation Serif',serif;color:#0a0ad0;letter-spacing:1.7px">00</span>
<span style="left:529.1px;top:536.44px;font-size:15px;line-height:15px;font-family:'Liberation Serif',serif;color:#111">h</span>
<span style="left:540.9px;top:535.60px;font-size:16px;line-height:16px;font-family:'Liberation Serif',serif;color:#0a0ad0;letter-spacing:1.7px">00</span>
<span style="left:563.6px;top:536.44px;font-size:15px;line-height:15px;font-family:'Liberation Serif',serif;color:#111">m</span>
<span style="left:579.6px;top:535.60px;font-size:16px;line-height:16px;font-family:'Liberation Serif',serif;color:#0a0ad0;letter-spacing:1.7px">00</span>
<span style="left:601.8px;top:536.44px;font-size:15px;line-height:15px;font-family:'Liberation Serif',serif;color:#111">s</span>
<div style="left:610px;top:536px;width:9px;height:18px;background:#c9c9c9;box-shadow:inset 1px 1px 0 #fff,inset -1px -1px 0 #a0a0b8"></div>
<svg style="left:610px;top:536px;" width="9" height="18" viewBox="0 0 9 18"><path d="M0.8 7 H8.2 L4.5 11Z" fill="#111"/></svg>
<div style="left:34px;top:563px;width:898px;height:1px;background:#a3a3bb"></div>
<div style="left:34px;top:564px;width:898px;height:1px;background:#fff"></div>
<span style="left:785px;top:566.69px;font-size:11px;line-height:11px;font-family:'Liberation Sans',sans-serif;color:#111;letter-spacing:0.45px">Actual Rate: 44100</span>
<svg style="left:915px;top:566px;" width="16" height="16" viewBox="0 0 16 16"><path d="M4 15 L15 4 M8 15 L15 8 M12 15 L15 12" stroke="#555" stroke-width="1.3"/></svg>
</body></html>
